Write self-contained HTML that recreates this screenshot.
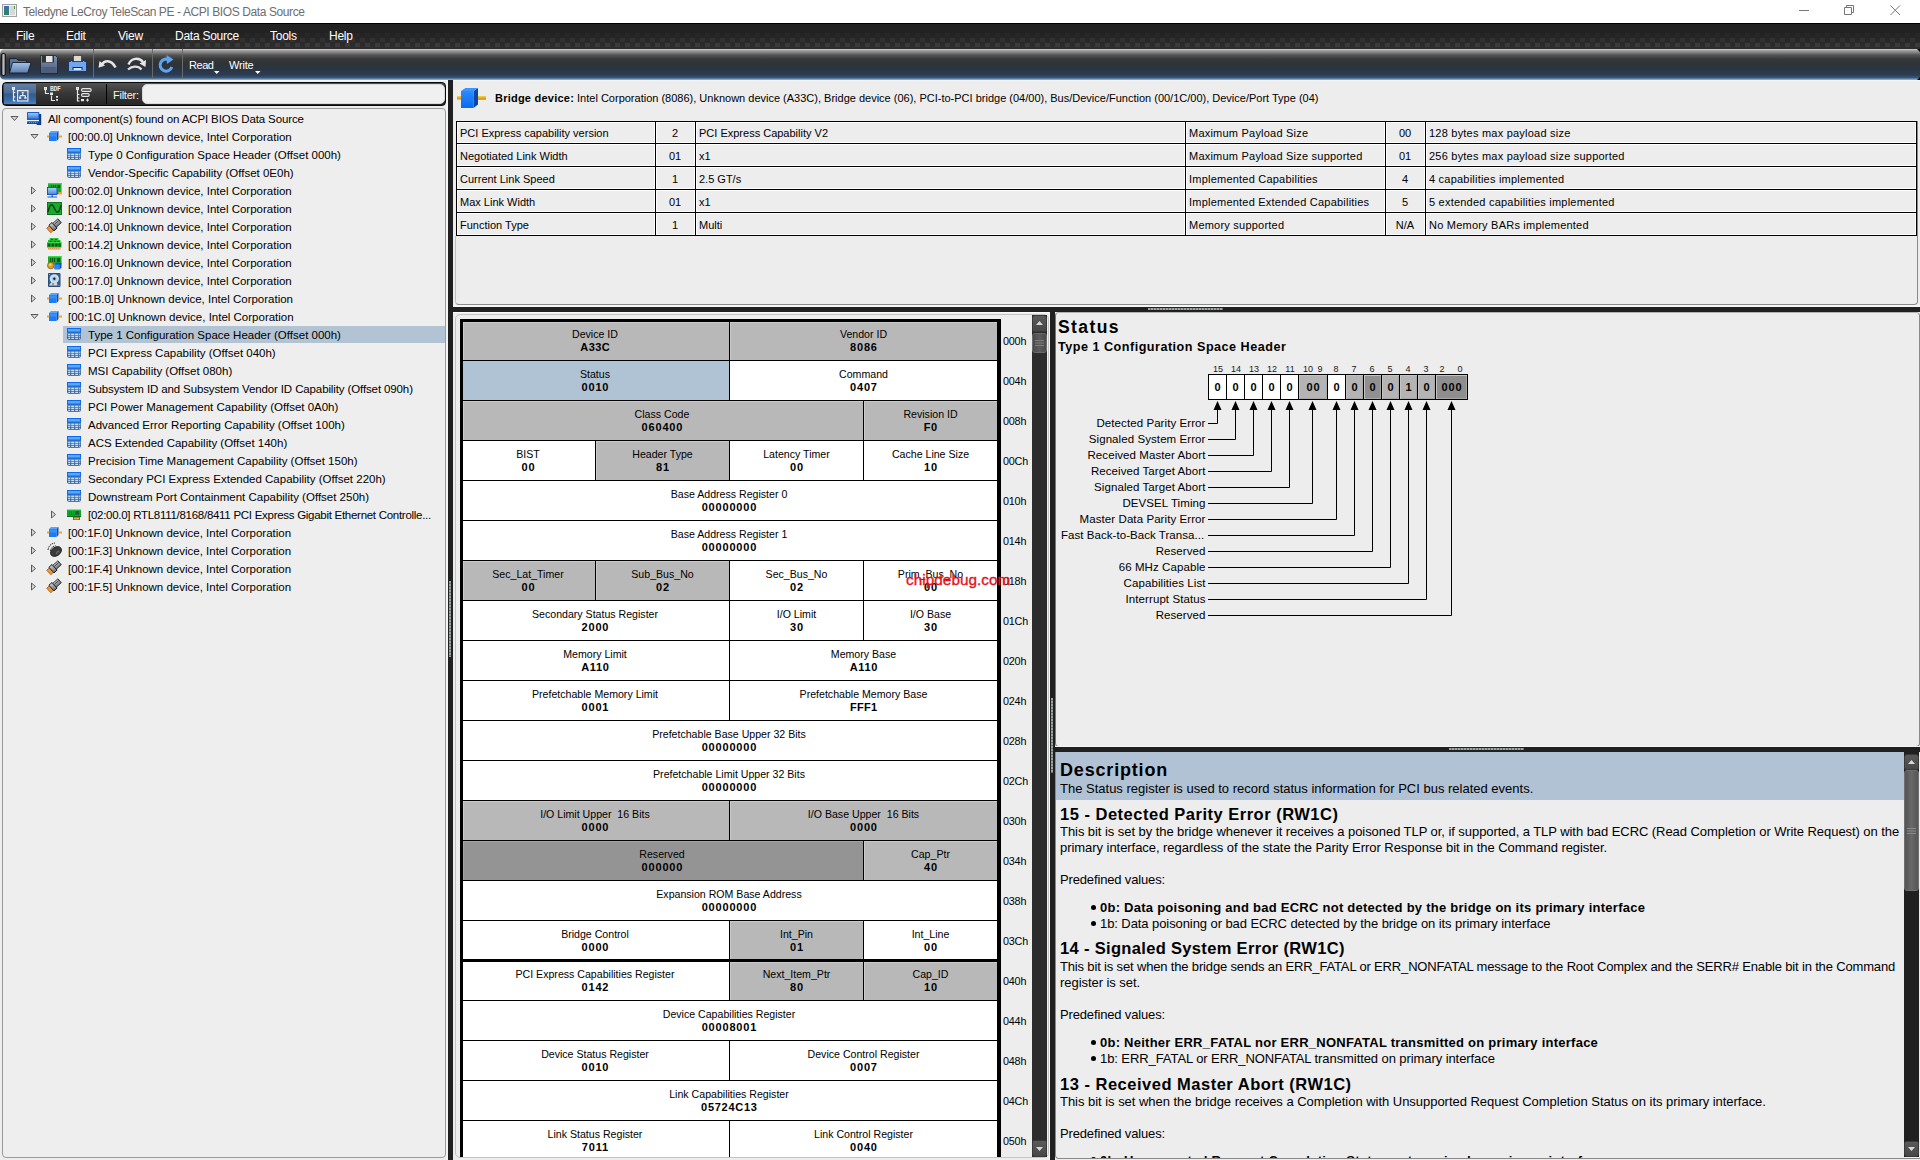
<!DOCTYPE html><html><head><meta charset="utf-8"><title>TeleScan PE</title><style>
html,body{margin:0;padding:0;width:1920px;height:1160px;overflow:hidden;background:#ededed;font-family:"Liberation Sans", sans-serif;}
.t{position:absolute;white-space:pre;font-family:"Liberation Sans", sans-serif;}
.b{position:absolute;box-sizing:border-box;}
svg{position:absolute;overflow:visible;}

</style></head><body>
<div class="b" style="left:0px;top:0px;width:1920px;height:23px;background:#fff;"></div>
<svg style="left:2px;top:4px" width="16" height="14" viewBox="0 0 16 14"><rect x="0.5" y="0.5" width="14" height="12" fill="#f2f2f2" stroke="#a0a0a0"/><rect x="2" y="2" width="5" height="9" fill="#2f7f74"/><rect x="2" y="2" width="5" height="4" fill="#3a6fb0"/><rect x="8" y="2" width="5" height="9" fill="#d8d8d8"/><rect x="12" y="2" width="1" height="3" fill="#3c9a50"/></svg>
<div class="t" style="left:23.00px;top:6.00px;font-size:12px;line-height:12px;font-weight:400;color:#6e6e6e;letter-spacing:-0.4px;">Teledyne LeCroy TeleScan PE - ACPI BIOS Data Source</div>
<div class="b" style="left:1799px;top:10px;width:10px;height:1px;background:#7a7a7a;"></div>
<svg style="left:1840px;top:2px" width="20" height="18" viewBox="0 0 20 18"><path d="M4.5 5.5h7v7h-7z M6.5 5.5v-2h7v7h-2" fill="none" stroke="#777" stroke-width="1"/></svg>
<svg style="left:1888px;top:3px" width="16" height="16" viewBox="0 0 16 16"><path d="M2.5 2.5L12 12M12 2.5L2.5 12" fill="none" stroke="#777" stroke-width="1"/></svg>
<div class="b" style="left:0px;top:23px;width:1920px;height:26px;background:linear-gradient(#000 0,#000 1px,#212121 1px,#222 10px,#2a2a2a 20px,#2e2e2e 26px);"></div>
<div class="b" style="left:0px;top:33px;width:1920px;height:14px;background-image:linear-gradient(90deg,transparent 5px,#272727 5px,#272727 10px,transparent 10px);background-size:10px 4px;background-repeat:repeat-x;background-position:0 0;"></div>
<div class="b" style="left:0px;top:38px;width:1920px;height:4px;background-image:linear-gradient(90deg,#313131 5px,transparent 5px);background-size:10px 4px;background-repeat:repeat-x;"></div>
<div class="b" style="left:0px;top:43px;width:1920px;height:4px;background-image:linear-gradient(90deg,transparent 5px,#3a3a3a 5px,#3a3a3a 10px,transparent 10px);background-size:10px 4px;background-repeat:repeat-x;"></div>
<div class="t" style="left:16.00px;top:30.00px;font-size:12px;line-height:12px;font-weight:400;color:#fff;letter-spacing:-0.25px;">File</div>
<div class="t" style="left:66.00px;top:30.00px;font-size:12px;line-height:12px;font-weight:400;color:#fff;letter-spacing:-0.25px;">Edit</div>
<div class="t" style="left:118.00px;top:30.00px;font-size:12px;line-height:12px;font-weight:400;color:#fff;letter-spacing:-0.25px;">View</div>
<div class="t" style="left:175.00px;top:30.00px;font-size:12px;line-height:12px;font-weight:400;color:#fff;letter-spacing:-0.25px;">Data Source</div>
<div class="t" style="left:270.00px;top:30.00px;font-size:12px;line-height:12px;font-weight:400;color:#fff;letter-spacing:-0.25px;">Tools</div>
<div class="t" style="left:329.00px;top:30.00px;font-size:12px;line-height:12px;font-weight:400;color:#fff;letter-spacing:-0.25px;">Help</div>
<div class="b" style="left:0px;top:49px;width:1920px;height:31px;border-radius:5px 0 0 5px;background:linear-gradient(#dcdcdc 0,#a8a8a8 1px,#8a8a8a 3px,#555 6px,#383838 10px,#2f3238 15px,#2a3646 21px,#2c3d52 26px,#3c5878 29px,#6f9ccc 30px,#8fb4dc 31px);"></div>
<div class="b" style="left:0px;top:80px;width:1920px;height:1px;background:#f4f4f4;"></div>
<svg style="left:1916px;top:49px" width="4" height="32" viewBox="0 0 4 32"><path d="M1 0H4V3z M4 28V31H1z" fill="#000"/></svg>
<div class="b" style="left:1px;top:53px;width:5px;height:23px;border-radius:2px;border:1px solid #1a1a1a;background:linear-gradient(90deg,#666,#b8b8b8 50%,#666);"></div>
<div class="b" style="left:93px;top:49px;width:1px;height:30px;background:#6a6a6a;"></div>
<div class="b" style="left:152px;top:49px;width:1px;height:30px;background:#6a6a6a;"></div>
<div class="b" style="left:182px;top:49px;width:1px;height:30px;background:#6a6a6a;"></div>
<svg style="left:8px;top:57px" width="24" height="18" viewBox="0 0 24 18"><defs><linearGradient id="fg" x1="0" y1="0" x2="0" y2="1"><stop offset="0" stop-color="#a4c2e8"/><stop offset="1" stop-color="#5c7eac"/></linearGradient></defs><path d="M1.5 1.5h7l1.5 1.8h8.5v12.2h-17z" fill="#59749c" stroke="#141c28" stroke-width="0.9"/><path d="M1.5 16 L4.5 5.5 H23 L19.8 16z" fill="url(#fg)" stroke="#141c28" stroke-width="0.9"/></svg>
<svg style="left:40px;top:55px" width="18" height="19" viewBox="0 0 18 19"><defs><linearGradient id="flg" x1="0" y1="0" x2="0" y2="1"><stop offset="0" stop-color="#7d93b8"/><stop offset="1" stop-color="#4a5a78"/></linearGradient></defs><path d="M0.5 0.5h15l2 2v16h-17z" fill="url(#flg)" stroke="#1c2230" stroke-width="0.8"/><rect x="2" y="0.5" width="12" height="7" fill="#333"/><rect x="6" y="1" width="6.5" height="6" fill="#e8e8e8"/><rect x="2.5" y="12" width="13" height="6" fill="#4d5d7a"/></svg>
<svg style="left:68px;top:55px" width="20" height="17" viewBox="0 0 20 17"><rect x="5.5" y="0.5" width="8" height="7" fill="#e0dcd2" stroke="#222" stroke-width="0.6"/><path d="M0.5 6.5h2v-1h2v1h10v-1h2v1h2v10h-18z" fill="#6ea5f5" stroke="#1a2a40" stroke-width="0.8"/><rect x="4.5" y="12" width="10" height="3" fill="#1e2a40"/><rect x="5.5" y="13" width="8" height="2" fill="#e8e0d0"/></svg>
<svg style="left:98px;top:58px" width="20" height="12" viewBox="0 0 20 12"><path d="M3 8 C6 2, 13 1, 17.5 9.5" fill="none" stroke="#e6e6e6" stroke-width="2.6"/><path d="M0.5 9.8 L1.5 3 L7 7.5z" fill="#e6e6e6"/></svg>
<svg style="left:127px;top:56px" width="20" height="15" viewBox="0 0 20 15"><path d="M1.5 8.5 C4 2, 12 1, 16 6" fill="none" stroke="#e6e6e6" stroke-width="2.4"/><path d="M19 4 L18.5 11 L12.5 7.5z" fill="#e6e6e6"/><path d="M1 13.5 C5 10, 11 9.5, 14.5 13.5" fill="none" stroke="#e0e0e0" stroke-width="2.2"/></svg>
<svg style="left:158px;top:54px" width="18" height="20" viewBox="0 0 18 20"><path d="M13.8 13 A6 6 0 1 1 11.5 6.2" fill="none" stroke="#5ea4ee" stroke-width="3"/><path d="M8.5 1 L15.5 5.5 L9 10z" fill="#5ea4ee"/></svg>
<div class="t" style="left:189.00px;top:60.00px;font-size:11px;line-height:11px;font-weight:400;color:#fff;letter-spacing:-0.45px;">Read</div>
<svg style="left:214px;top:71px" width="6" height="4" viewBox="0 0 6 4"><path d="M0 0h5.5l-2.75 3z" fill="#fff"/></svg>
<div class="t" style="left:229.00px;top:60.00px;font-size:11px;line-height:11px;font-weight:400;color:#fff;letter-spacing:-0.2px;">Write</div>
<svg style="left:255px;top:71px" width="6" height="4" viewBox="0 0 6 4"><path d="M0 0h5.5l-2.75 3z" fill="#fff"/></svg>
<div class="b" style="left:2px;top:82px;width:444px;height:24px;border-radius:4px;border:1px solid #0a0a0a;background:linear-gradient(#525252,#383838 45%,#262626);"></div>
<div class="b" style="left:4px;top:84px;width:32px;height:20px;background:linear-gradient(#5f7fa6 0,#4a6b94 45%,#335a8a 50%,#3a6aa6 80%,#4585cc 100%);"></div>
<svg style="left:0;top:82px" width="100" height="24" viewBox="0 82 100 24"><g fill="none" stroke="#e6e6e6" stroke-width="1.2"><rect x="12.6" y="87.6" width="1.8" height="1.8"/><path d="M13.5 89.5V101M13.5 92.5h1.8M13.5 96.8h1.8M13.5 100.8h1.8"/><rect x="17.6" y="90.6" width="10.3" height="10.4"/><path d="M22.7 93.5v2.2M20 95.7h5.5M20 95.7v1.5M25.4 95.7v1.5"/></g><g fill="#e6e6e6"><rect x="21.8" y="92" width="1.9" height="1.6"/><rect x="19" y="97" width="2.2" height="1.8"/><rect x="24.3" y="97" width="2.2" height="1.8"/></g><g fill="none" stroke="#e6e6e6" stroke-width="1.2"><rect x="44.6" y="87.6" width="1.8" height="1.8"/><path d="M45.5 89.5V93.5H49M51.5 95.5V100.5H55"/></g><g fill="#e6e6e6"><rect x="50" y="92.5" width="3" height="2.5"/><rect x="56" y="96" width="2" height="1.7"/><rect x="56" y="99" width="2" height="1.7"/></g><text x="50" y="91.3" font-size="6.3" font-family="Liberation Mono" font-weight="700" fill="#e6e6e6" letter-spacing="-0.3">BDF</text><g fill="none" stroke="#e6e6e6" stroke-width="1.2"><rect x="76.6" y="87.6" width="1.8" height="1.8"/><path d="M77.5 89.5V101H79.5M77.5 94.5h2M77.5 98h2"/><rect x="81.6" y="88.6" width="9.5" height="2.8" rx="1.2"/><rect x="81.6" y="93.6" width="7.5" height="2.8" rx="1.2"/></g><g fill="#e6e6e6"><rect x="81" y="99" width="3" height="2.2"/><path d="M86 100.1h3M87.5 98.6v3" stroke="#e6e6e6" stroke-width="1"/></g></svg>
<div class="b" style="left:106px;top:84px;width:1px;height:20px;background:#000;"></div>
<div class="t" style="left:113.00px;top:90.00px;font-size:11px;line-height:11px;font-weight:400;color:#f4f4f4;letter-spacing:-0.25px;">Filter:</div>
<div class="b" style="left:142px;top:84px;width:303px;height:20px;border-radius:5px;background:#f0f0f0;border:1px solid #d8d8d8;"></div>
<div class="b" style="left:2px;top:108px;width:444px;height:1050px;border-radius:4px;border:1px solid #9a9a9a;background:#eeeeee;"></div>
<div class="b" style="left:63px;top:326px;width:382px;height:17px;background:#b2c3d4;"></div>
<svg style="left:9.5px;top:114.5px" width="9" height="7" viewBox="0 0 9 7"><path d="M1 1.5h7l-3.5 4z" fill="#d8d8d8" stroke="#5a5a5a" stroke-width="1"/></svg>
<svg style="left:27px;top:112px" width="15" height="14" viewBox="0 0 15 14"><defs><linearGradient id="rscr" x1="0" y1="0" x2="0" y2="1"><stop offset="0" stop-color="#9cc8f8"/><stop offset="1" stop-color="#3a7ad8"/></linearGradient></defs><path d="M12 2h2.2v11h-4.5v-1.5h2.3z" fill="#0a3a90"/><rect x="0" y="0" width="12.3" height="8" rx="0.6" fill="#1a5ec8"/><rect x="1" y="1" width="10.3" height="5.6" fill="url(#rscr)"/><path d="M0.3 9.2h12.5l0.5 2.8h-13.3z" fill="#0a4aa8"/><path d="M2 10.6h8.5" stroke="#8ab8f0" stroke-width="0.8" stroke-dasharray="1.2 0.8"/></svg>
<div class="t" style="left:48.00px;top:114.00px;font-size:11.5px;line-height:11.5px;font-weight:400;color:#000;letter-spacing:-0.12px;">All component(s) found on ACPI BIOS Data Source</div>
<svg style="left:29.5px;top:132.5px" width="9" height="7" viewBox="0 0 9 7"><path d="M1 1.5h7l-3.5 4z" fill="#d8d8d8" stroke="#5a5a5a" stroke-width="1"/></svg>
<svg style="left:47px;top:130px" width="15" height="13" viewBox="0 0 15 13"><path d="M2 3 L4 1 H11.5 L9.5 3z" fill="#52a6ff"/><path d="M9.5 3 L11.5 1 V9 L9.5 11z" fill="#0a4cc0"/><rect x="2" y="3" width="7.5" height="8" fill="#1a7cf8"/><rect x="2.5" y="3.5" width="6.5" height="3" fill="#3a8ef8"/><rect x="0" y="5.5" width="2" height="2" fill="#eca818"/><rect x="11.5" y="5.5" width="3.5" height="2" fill="#eca818"/></svg>
<div class="t" style="left:68.00px;top:132.00px;font-size:11.5px;line-height:11.5px;font-weight:400;color:#000;letter-spacing:0px;">[00:00.0] Unknown device, Intel Corporation</div>
<svg style="left:67px;top:148px" width="14" height="12" viewBox="0 0 14 12"><defs><linearGradient id="tblg" x1="0" y1="0" x2="0" y2="1"><stop offset="0" stop-color="#23426a"/><stop offset="0.5" stop-color="#5080b8"/><stop offset="1" stop-color="#2a4a74"/></linearGradient></defs><path d="M0 0h14v9.7a2 2 0 0 1 -2 2h-10a2 2 0 0 1 -2 -2z" fill="url(#tblg)"/><rect x="0" y="0" width="14" height="4.4" rx="0.6" fill="#0a6af8"/><rect x="1" y="1" width="12" height="2.5" fill="#5aaafc"/><g fill="#c4defc"><rect x="1.2" y="5.7" width="2" height="1.3"/><rect x="4.2" y="5.7" width="3" height="1.3"/><rect x="8.2" y="5.7" width="3" height="1.3"/><rect x="12.2" y="5.7" width="1" height="1.3"/><rect x="1.2" y="7.7" width="2" height="1.3"/><rect x="4.2" y="7.7" width="3" height="1.3"/><rect x="8.2" y="7.7" width="3" height="1.3"/><rect x="12.2" y="7.7" width="1" height="1.3"/><rect x="1.2" y="9.7" width="2" height="1.3"/><rect x="4.2" y="9.7" width="3" height="1.3"/><rect x="8.2" y="9.7" width="3" height="1.3"/><rect x="12.2" y="9.7" width="1" height="1.3"/></g></svg>
<div class="t" style="left:88.00px;top:150.00px;font-size:11.5px;line-height:11.5px;font-weight:400;color:#000;letter-spacing:0px;">Type 0 Configuration Space Header (Offset 000h)</div>
<svg style="left:67px;top:166px" width="14" height="12" viewBox="0 0 14 12"><defs><linearGradient id="tblg" x1="0" y1="0" x2="0" y2="1"><stop offset="0" stop-color="#23426a"/><stop offset="0.5" stop-color="#5080b8"/><stop offset="1" stop-color="#2a4a74"/></linearGradient></defs><path d="M0 0h14v9.7a2 2 0 0 1 -2 2h-10a2 2 0 0 1 -2 -2z" fill="url(#tblg)"/><rect x="0" y="0" width="14" height="4.4" rx="0.6" fill="#0a6af8"/><rect x="1" y="1" width="12" height="2.5" fill="#5aaafc"/><g fill="#c4defc"><rect x="1.2" y="5.7" width="2" height="1.3"/><rect x="4.2" y="5.7" width="3" height="1.3"/><rect x="8.2" y="5.7" width="3" height="1.3"/><rect x="12.2" y="5.7" width="1" height="1.3"/><rect x="1.2" y="7.7" width="2" height="1.3"/><rect x="4.2" y="7.7" width="3" height="1.3"/><rect x="8.2" y="7.7" width="3" height="1.3"/><rect x="12.2" y="7.7" width="1" height="1.3"/><rect x="1.2" y="9.7" width="2" height="1.3"/><rect x="4.2" y="9.7" width="3" height="1.3"/><rect x="8.2" y="9.7" width="3" height="1.3"/><rect x="12.2" y="9.7" width="1" height="1.3"/></g></svg>
<div class="t" style="left:88.00px;top:168.00px;font-size:11.5px;line-height:11.5px;font-weight:400;color:#000;letter-spacing:0px;">Vendor-Specific Capability (Offset 0E0h)</div>
<svg style="left:30.0px;top:185.5px" width="7" height="9" viewBox="0 0 7 9"><path d="M1.5 1v7l4-3.5z" fill="#d8d8d8" stroke="#5a5a5a" stroke-width="1"/></svg>
<svg style="left:47px;top:183px" width="15" height="15" viewBox="0 0 15 15"><rect x="1" y="0" width="13.5" height="11" fill="#1aa82a"/><rect x="1" y="0" width="13.5" height="1.3" fill="#3ad84a"/><g fill="#0c5a18"><rect x="4" y="2" width="1" height="3"/><rect x="6" y="2" width="1" height="3"/><rect x="8" y="2" width="1" height="3"/><rect x="10.5" y="2" width="2.5" height="3"/></g><rect x="11.5" y="9" width="3" height="2.5" fill="#f0a040"/><defs><linearGradient id="dscr" x1="0" y1="0" x2="0" y2="1"><stop offset="0" stop-color="#a8d0f8"/><stop offset="1" stop-color="#4a8ae0"/></linearGradient></defs><rect x="0" y="4" width="10.5" height="8" fill="#1a56c0"/><rect x="1" y="5" width="8.5" height="6" fill="url(#dscr)"/><path d="M5.2 12v1.5M0.5 14h9.5" stroke="#1a56c0" stroke-width="1.2"/></svg>
<div class="t" style="left:68.00px;top:186.00px;font-size:11.5px;line-height:11.5px;font-weight:400;color:#000;letter-spacing:0px;">[00:02.0] Unknown device, Intel Corporation</div>
<svg style="left:30.0px;top:203.5px" width="7" height="9" viewBox="0 0 7 9"><path d="M1.5 1v7l4-3.5z" fill="#d8d8d8" stroke="#5a5a5a" stroke-width="1"/></svg>
<svg style="left:47px;top:202px" width="15" height="13" viewBox="0 0 15 13"><rect x="0" y="0" width="15" height="13" fill="#1aa830"/><rect x="0.5" y="0.5" width="14" height="12" fill="none" stroke="#0a7a18"/><path d="M1 10 C3 1, 5 1, 7.5 6.5 S12 12, 14 3" fill="none" stroke="#043a0a" stroke-width="1.3"/></svg>
<div class="t" style="left:68.00px;top:204.00px;font-size:11.5px;line-height:11.5px;font-weight:400;color:#000;letter-spacing:0px;">[00:12.0] Unknown device, Intel Corporation</div>
<svg style="left:30.0px;top:221.5px" width="7" height="9" viewBox="0 0 7 9"><path d="M1.5 1v7l4-3.5z" fill="#d8d8d8" stroke="#5a5a5a" stroke-width="1"/></svg>
<svg style="left:47px;top:218px" width="15" height="15" viewBox="0 0 15 15"><defs><linearGradient id="usbg" x1="0" y1="0" x2="0" y2="1"><stop offset="0" stop-color="#c8ccd0"/><stop offset="1" stop-color="#6a7078"/></linearGradient></defs><g transform="translate(7.2 7.6) rotate(-42)"><rect x="-7.3" y="-3" width="3.6" height="6" fill="#f09838" stroke="#8a4a10" stroke-width="0.7"/><rect x="-3.7" y="-3.8" width="4.2" height="7.6" fill="url(#usbg)" stroke="#181818" stroke-width="0.9"/><rect x="0.5" y="-2.6" width="6.8" height="5.2" fill="url(#usbg)" stroke="#202020" stroke-width="0.8"/><path d="M1 -0.8h6" stroke="#303030" stroke-width="0.8"/></g></svg>
<div class="t" style="left:68.00px;top:222.00px;font-size:11.5px;line-height:11.5px;font-weight:400;color:#000;letter-spacing:0px;">[00:14.0] Unknown device, Intel Corporation</div>
<svg style="left:30.0px;top:239.5px" width="7" height="9" viewBox="0 0 7 9"><path d="M1.5 1v7l4-3.5z" fill="#d8d8d8" stroke="#5a5a5a" stroke-width="1"/></svg>
<svg style="left:47px;top:237px" width="15" height="14" viewBox="0 0 15 14"><rect x="2.5" y="1" width="9" height="2" fill="#2ac83a"/><rect x="1" y="3" width="12.5" height="2" fill="#22b832"/><rect x="0" y="5" width="14.5" height="5.5" fill="#18a828"/><rect x="0" y="5" width="14.5" height="1.2" fill="#3ad84a"/><g fill="#0a4a14"><rect x="1.3" y="6.5" width="2" height="3"/><rect x="4.8" y="6.5" width="2" height="3"/><rect x="8.3" y="6.5" width="2" height="3"/><rect x="11.5" y="6.5" width="2" height="3"/></g><g fill="#0a5a18"><rect x="4" y="2" width="2" height="1"/><rect x="8" y="2" width="2" height="1"/><rect x="3" y="4" width="2" height="1"/><rect x="7" y="4" width="2" height="1"/><rect x="10.5" y="4" width="2" height="1"/></g><rect x="1" y="10.5" width="12.5" height="2" fill="#f08a48"/><path d="M2 11.5h11" stroke="#ffd080" stroke-width="0.6" stroke-dasharray="1 1"/></svg>
<div class="t" style="left:68.00px;top:240.00px;font-size:11.5px;line-height:11.5px;font-weight:400;color:#000;letter-spacing:0px;">[00:14.2] Unknown device, Intel Corporation</div>
<svg style="left:30.0px;top:257.5px" width="7" height="9" viewBox="0 0 7 9"><path d="M1.5 1v7l4-3.5z" fill="#d8d8d8" stroke="#5a5a5a" stroke-width="1"/></svg>
<svg style="left:47px;top:255px" width="15" height="15" viewBox="0 0 15 15"><rect x="1" y="1" width="13.5" height="8.5" fill="#1aa82a"/><rect x="1" y="1" width="13.5" height="1.3" fill="#3ad84a"/><g fill="#0c5a18"><rect x="3" y="3" width="1" height="4"/><rect x="5" y="3" width="1" height="4"/><rect x="7" y="3" width="1" height="4"/><rect x="10" y="3" width="3" height="4"/></g><path d="M7.5 9.5 L9.5 7.8 H14.5 V12.5 L12.8 14.2 H7.5z" fill="#0a50c8"/><rect x="7.5" y="9.5" width="5.3" height="4.7" fill="#2a88f8"/><circle cx="3.8" cy="10.5" r="3.3" fill="#e0a028" stroke="#8a5a10" stroke-width="0.8"/><circle cx="3.2" cy="9.6" r="1.2" fill="#f8d870"/></svg>
<div class="t" style="left:68.00px;top:258.00px;font-size:11.5px;line-height:11.5px;font-weight:400;color:#000;letter-spacing:0px;">[00:16.0] Unknown device, Intel Corporation</div>
<svg style="left:30.0px;top:275.5px" width="7" height="9" viewBox="0 0 7 9"><path d="M1.5 1v7l4-3.5z" fill="#d8d8d8" stroke="#5a5a5a" stroke-width="1"/></svg>
<svg style="left:47px;top:273px" width="15" height="15" viewBox="0 0 15 15"><rect x="1" y="0" width="12.5" height="14" rx="1" fill="#2a4a78"/><rect x="1.8" y="0.8" width="10.9" height="12.4" fill="#3a5e90"/><circle cx="7.3" cy="5.8" r="4.6" fill="#c8e4f4"/><circle cx="7.3" cy="5.8" r="2.5" fill="#a0c8e8"/><path d="M7.3 4.3 L8.8 5.8 L7.3 7.3 L5.8 5.8z" fill="#202020"/><path d="M2 12.5 L4 9.5 L8 8.5 L10 10 L10.5 12.5z" fill="#d8d8d8"/><circle cx="6" cy="11" r="0.8" fill="#404040"/><circle cx="2.5" cy="1.5" r="0.5" fill="#a0c0e0"/><circle cx="12" cy="12.5" r="0.5" fill="#a0c0e0"/></svg>
<div class="t" style="left:68.00px;top:276.00px;font-size:11.5px;line-height:11.5px;font-weight:400;color:#000;letter-spacing:0px;">[00:17.0] Unknown device, Intel Corporation</div>
<svg style="left:30.0px;top:293.5px" width="7" height="9" viewBox="0 0 7 9"><path d="M1.5 1v7l4-3.5z" fill="#d8d8d8" stroke="#5a5a5a" stroke-width="1"/></svg>
<svg style="left:47px;top:292px" width="15" height="13" viewBox="0 0 15 13"><path d="M2 3 L4 1 H11.5 L9.5 3z" fill="#52a6ff"/><path d="M9.5 3 L11.5 1 V9 L9.5 11z" fill="#0a4cc0"/><rect x="2" y="3" width="7.5" height="8" fill="#1a7cf8"/><rect x="2.5" y="3.5" width="6.5" height="3" fill="#3a8ef8"/><rect x="0" y="5.5" width="2" height="2" fill="#eca818"/><rect x="11.5" y="5.5" width="3.5" height="2" fill="#eca818"/></svg>
<div class="t" style="left:68.00px;top:294.00px;font-size:11.5px;line-height:11.5px;font-weight:400;color:#000;letter-spacing:0px;">[00:1B.0] Unknown device, Intel Corporation</div>
<svg style="left:29.5px;top:312.5px" width="9" height="7" viewBox="0 0 9 7"><path d="M1 1.5h7l-3.5 4z" fill="#d8d8d8" stroke="#5a5a5a" stroke-width="1"/></svg>
<svg style="left:47px;top:310px" width="15" height="13" viewBox="0 0 15 13"><path d="M2 3 L4 1 H11.5 L9.5 3z" fill="#52a6ff"/><path d="M9.5 3 L11.5 1 V9 L9.5 11z" fill="#0a4cc0"/><rect x="2" y="3" width="7.5" height="8" fill="#1a7cf8"/><rect x="2.5" y="3.5" width="6.5" height="3" fill="#3a8ef8"/><rect x="0" y="5.5" width="2" height="2" fill="#eca818"/><rect x="11.5" y="5.5" width="3.5" height="2" fill="#eca818"/></svg>
<div class="t" style="left:68.00px;top:312.00px;font-size:11.5px;line-height:11.5px;font-weight:400;color:#000;letter-spacing:0px;">[00:1C.0] Unknown device, Intel Corporation</div>
<svg style="left:67px;top:328px" width="14" height="12" viewBox="0 0 14 12"><defs><linearGradient id="tblg" x1="0" y1="0" x2="0" y2="1"><stop offset="0" stop-color="#23426a"/><stop offset="0.5" stop-color="#5080b8"/><stop offset="1" stop-color="#2a4a74"/></linearGradient></defs><path d="M0 0h14v9.7a2 2 0 0 1 -2 2h-10a2 2 0 0 1 -2 -2z" fill="url(#tblg)"/><rect x="0" y="0" width="14" height="4.4" rx="0.6" fill="#0a6af8"/><rect x="1" y="1" width="12" height="2.5" fill="#5aaafc"/><g fill="#c4defc"><rect x="1.2" y="5.7" width="2" height="1.3"/><rect x="4.2" y="5.7" width="3" height="1.3"/><rect x="8.2" y="5.7" width="3" height="1.3"/><rect x="12.2" y="5.7" width="1" height="1.3"/><rect x="1.2" y="7.7" width="2" height="1.3"/><rect x="4.2" y="7.7" width="3" height="1.3"/><rect x="8.2" y="7.7" width="3" height="1.3"/><rect x="12.2" y="7.7" width="1" height="1.3"/><rect x="1.2" y="9.7" width="2" height="1.3"/><rect x="4.2" y="9.7" width="3" height="1.3"/><rect x="8.2" y="9.7" width="3" height="1.3"/><rect x="12.2" y="9.7" width="1" height="1.3"/></g></svg>
<div class="t" style="left:88.00px;top:330.00px;font-size:11.5px;line-height:11.5px;font-weight:400;color:#000;letter-spacing:0px;">Type 1 Configuration Space Header (Offset 000h)</div>
<svg style="left:67px;top:346px" width="14" height="12" viewBox="0 0 14 12"><defs><linearGradient id="tblg" x1="0" y1="0" x2="0" y2="1"><stop offset="0" stop-color="#23426a"/><stop offset="0.5" stop-color="#5080b8"/><stop offset="1" stop-color="#2a4a74"/></linearGradient></defs><path d="M0 0h14v9.7a2 2 0 0 1 -2 2h-10a2 2 0 0 1 -2 -2z" fill="url(#tblg)"/><rect x="0" y="0" width="14" height="4.4" rx="0.6" fill="#0a6af8"/><rect x="1" y="1" width="12" height="2.5" fill="#5aaafc"/><g fill="#c4defc"><rect x="1.2" y="5.7" width="2" height="1.3"/><rect x="4.2" y="5.7" width="3" height="1.3"/><rect x="8.2" y="5.7" width="3" height="1.3"/><rect x="12.2" y="5.7" width="1" height="1.3"/><rect x="1.2" y="7.7" width="2" height="1.3"/><rect x="4.2" y="7.7" width="3" height="1.3"/><rect x="8.2" y="7.7" width="3" height="1.3"/><rect x="12.2" y="7.7" width="1" height="1.3"/><rect x="1.2" y="9.7" width="2" height="1.3"/><rect x="4.2" y="9.7" width="3" height="1.3"/><rect x="8.2" y="9.7" width="3" height="1.3"/><rect x="12.2" y="9.7" width="1" height="1.3"/></g></svg>
<div class="t" style="left:88.00px;top:348.00px;font-size:11.5px;line-height:11.5px;font-weight:400;color:#000;letter-spacing:0px;">PCI Express Capability (Offset 040h)</div>
<svg style="left:67px;top:364px" width="14" height="12" viewBox="0 0 14 12"><defs><linearGradient id="tblg" x1="0" y1="0" x2="0" y2="1"><stop offset="0" stop-color="#23426a"/><stop offset="0.5" stop-color="#5080b8"/><stop offset="1" stop-color="#2a4a74"/></linearGradient></defs><path d="M0 0h14v9.7a2 2 0 0 1 -2 2h-10a2 2 0 0 1 -2 -2z" fill="url(#tblg)"/><rect x="0" y="0" width="14" height="4.4" rx="0.6" fill="#0a6af8"/><rect x="1" y="1" width="12" height="2.5" fill="#5aaafc"/><g fill="#c4defc"><rect x="1.2" y="5.7" width="2" height="1.3"/><rect x="4.2" y="5.7" width="3" height="1.3"/><rect x="8.2" y="5.7" width="3" height="1.3"/><rect x="12.2" y="5.7" width="1" height="1.3"/><rect x="1.2" y="7.7" width="2" height="1.3"/><rect x="4.2" y="7.7" width="3" height="1.3"/><rect x="8.2" y="7.7" width="3" height="1.3"/><rect x="12.2" y="7.7" width="1" height="1.3"/><rect x="1.2" y="9.7" width="2" height="1.3"/><rect x="4.2" y="9.7" width="3" height="1.3"/><rect x="8.2" y="9.7" width="3" height="1.3"/><rect x="12.2" y="9.7" width="1" height="1.3"/></g></svg>
<div class="t" style="left:88.00px;top:366.00px;font-size:11.5px;line-height:11.5px;font-weight:400;color:#000;letter-spacing:0px;">MSI Capability (Offset 080h)</div>
<svg style="left:67px;top:382px" width="14" height="12" viewBox="0 0 14 12"><defs><linearGradient id="tblg" x1="0" y1="0" x2="0" y2="1"><stop offset="0" stop-color="#23426a"/><stop offset="0.5" stop-color="#5080b8"/><stop offset="1" stop-color="#2a4a74"/></linearGradient></defs><path d="M0 0h14v9.7a2 2 0 0 1 -2 2h-10a2 2 0 0 1 -2 -2z" fill="url(#tblg)"/><rect x="0" y="0" width="14" height="4.4" rx="0.6" fill="#0a6af8"/><rect x="1" y="1" width="12" height="2.5" fill="#5aaafc"/><g fill="#c4defc"><rect x="1.2" y="5.7" width="2" height="1.3"/><rect x="4.2" y="5.7" width="3" height="1.3"/><rect x="8.2" y="5.7" width="3" height="1.3"/><rect x="12.2" y="5.7" width="1" height="1.3"/><rect x="1.2" y="7.7" width="2" height="1.3"/><rect x="4.2" y="7.7" width="3" height="1.3"/><rect x="8.2" y="7.7" width="3" height="1.3"/><rect x="12.2" y="7.7" width="1" height="1.3"/><rect x="1.2" y="9.7" width="2" height="1.3"/><rect x="4.2" y="9.7" width="3" height="1.3"/><rect x="8.2" y="9.7" width="3" height="1.3"/><rect x="12.2" y="9.7" width="1" height="1.3"/></g></svg>
<div class="t" style="left:88.00px;top:384.00px;font-size:11.5px;line-height:11.5px;font-weight:400;color:#000;letter-spacing:-0.12px;">Subsystem ID and Subsystem Vendor ID Capability (Offset 090h)</div>
<svg style="left:67px;top:400px" width="14" height="12" viewBox="0 0 14 12"><defs><linearGradient id="tblg" x1="0" y1="0" x2="0" y2="1"><stop offset="0" stop-color="#23426a"/><stop offset="0.5" stop-color="#5080b8"/><stop offset="1" stop-color="#2a4a74"/></linearGradient></defs><path d="M0 0h14v9.7a2 2 0 0 1 -2 2h-10a2 2 0 0 1 -2 -2z" fill="url(#tblg)"/><rect x="0" y="0" width="14" height="4.4" rx="0.6" fill="#0a6af8"/><rect x="1" y="1" width="12" height="2.5" fill="#5aaafc"/><g fill="#c4defc"><rect x="1.2" y="5.7" width="2" height="1.3"/><rect x="4.2" y="5.7" width="3" height="1.3"/><rect x="8.2" y="5.7" width="3" height="1.3"/><rect x="12.2" y="5.7" width="1" height="1.3"/><rect x="1.2" y="7.7" width="2" height="1.3"/><rect x="4.2" y="7.7" width="3" height="1.3"/><rect x="8.2" y="7.7" width="3" height="1.3"/><rect x="12.2" y="7.7" width="1" height="1.3"/><rect x="1.2" y="9.7" width="2" height="1.3"/><rect x="4.2" y="9.7" width="3" height="1.3"/><rect x="8.2" y="9.7" width="3" height="1.3"/><rect x="12.2" y="9.7" width="1" height="1.3"/></g></svg>
<div class="t" style="left:88.00px;top:402.00px;font-size:11.5px;line-height:11.5px;font-weight:400;color:#000;letter-spacing:0px;">PCI Power Management Capability (Offset 0A0h)</div>
<svg style="left:67px;top:418px" width="14" height="12" viewBox="0 0 14 12"><defs><linearGradient id="tblg" x1="0" y1="0" x2="0" y2="1"><stop offset="0" stop-color="#23426a"/><stop offset="0.5" stop-color="#5080b8"/><stop offset="1" stop-color="#2a4a74"/></linearGradient></defs><path d="M0 0h14v9.7a2 2 0 0 1 -2 2h-10a2 2 0 0 1 -2 -2z" fill="url(#tblg)"/><rect x="0" y="0" width="14" height="4.4" rx="0.6" fill="#0a6af8"/><rect x="1" y="1" width="12" height="2.5" fill="#5aaafc"/><g fill="#c4defc"><rect x="1.2" y="5.7" width="2" height="1.3"/><rect x="4.2" y="5.7" width="3" height="1.3"/><rect x="8.2" y="5.7" width="3" height="1.3"/><rect x="12.2" y="5.7" width="1" height="1.3"/><rect x="1.2" y="7.7" width="2" height="1.3"/><rect x="4.2" y="7.7" width="3" height="1.3"/><rect x="8.2" y="7.7" width="3" height="1.3"/><rect x="12.2" y="7.7" width="1" height="1.3"/><rect x="1.2" y="9.7" width="2" height="1.3"/><rect x="4.2" y="9.7" width="3" height="1.3"/><rect x="8.2" y="9.7" width="3" height="1.3"/><rect x="12.2" y="9.7" width="1" height="1.3"/></g></svg>
<div class="t" style="left:88.00px;top:420.00px;font-size:11.5px;line-height:11.5px;font-weight:400;color:#000;letter-spacing:0px;">Advanced Error Reporting Capability (Offset 100h)</div>
<svg style="left:67px;top:436px" width="14" height="12" viewBox="0 0 14 12"><defs><linearGradient id="tblg" x1="0" y1="0" x2="0" y2="1"><stop offset="0" stop-color="#23426a"/><stop offset="0.5" stop-color="#5080b8"/><stop offset="1" stop-color="#2a4a74"/></linearGradient></defs><path d="M0 0h14v9.7a2 2 0 0 1 -2 2h-10a2 2 0 0 1 -2 -2z" fill="url(#tblg)"/><rect x="0" y="0" width="14" height="4.4" rx="0.6" fill="#0a6af8"/><rect x="1" y="1" width="12" height="2.5" fill="#5aaafc"/><g fill="#c4defc"><rect x="1.2" y="5.7" width="2" height="1.3"/><rect x="4.2" y="5.7" width="3" height="1.3"/><rect x="8.2" y="5.7" width="3" height="1.3"/><rect x="12.2" y="5.7" width="1" height="1.3"/><rect x="1.2" y="7.7" width="2" height="1.3"/><rect x="4.2" y="7.7" width="3" height="1.3"/><rect x="8.2" y="7.7" width="3" height="1.3"/><rect x="12.2" y="7.7" width="1" height="1.3"/><rect x="1.2" y="9.7" width="2" height="1.3"/><rect x="4.2" y="9.7" width="3" height="1.3"/><rect x="8.2" y="9.7" width="3" height="1.3"/><rect x="12.2" y="9.7" width="1" height="1.3"/></g></svg>
<div class="t" style="left:88.00px;top:438.00px;font-size:11.5px;line-height:11.5px;font-weight:400;color:#000;letter-spacing:0px;">ACS Extended Capability (Offset 140h)</div>
<svg style="left:67px;top:454px" width="14" height="12" viewBox="0 0 14 12"><defs><linearGradient id="tblg" x1="0" y1="0" x2="0" y2="1"><stop offset="0" stop-color="#23426a"/><stop offset="0.5" stop-color="#5080b8"/><stop offset="1" stop-color="#2a4a74"/></linearGradient></defs><path d="M0 0h14v9.7a2 2 0 0 1 -2 2h-10a2 2 0 0 1 -2 -2z" fill="url(#tblg)"/><rect x="0" y="0" width="14" height="4.4" rx="0.6" fill="#0a6af8"/><rect x="1" y="1" width="12" height="2.5" fill="#5aaafc"/><g fill="#c4defc"><rect x="1.2" y="5.7" width="2" height="1.3"/><rect x="4.2" y="5.7" width="3" height="1.3"/><rect x="8.2" y="5.7" width="3" height="1.3"/><rect x="12.2" y="5.7" width="1" height="1.3"/><rect x="1.2" y="7.7" width="2" height="1.3"/><rect x="4.2" y="7.7" width="3" height="1.3"/><rect x="8.2" y="7.7" width="3" height="1.3"/><rect x="12.2" y="7.7" width="1" height="1.3"/><rect x="1.2" y="9.7" width="2" height="1.3"/><rect x="4.2" y="9.7" width="3" height="1.3"/><rect x="8.2" y="9.7" width="3" height="1.3"/><rect x="12.2" y="9.7" width="1" height="1.3"/></g></svg>
<div class="t" style="left:88.00px;top:456.00px;font-size:11.5px;line-height:11.5px;font-weight:400;color:#000;letter-spacing:0px;">Precision Time Management Capability (Offset 150h)</div>
<svg style="left:67px;top:472px" width="14" height="12" viewBox="0 0 14 12"><defs><linearGradient id="tblg" x1="0" y1="0" x2="0" y2="1"><stop offset="0" stop-color="#23426a"/><stop offset="0.5" stop-color="#5080b8"/><stop offset="1" stop-color="#2a4a74"/></linearGradient></defs><path d="M0 0h14v9.7a2 2 0 0 1 -2 2h-10a2 2 0 0 1 -2 -2z" fill="url(#tblg)"/><rect x="0" y="0" width="14" height="4.4" rx="0.6" fill="#0a6af8"/><rect x="1" y="1" width="12" height="2.5" fill="#5aaafc"/><g fill="#c4defc"><rect x="1.2" y="5.7" width="2" height="1.3"/><rect x="4.2" y="5.7" width="3" height="1.3"/><rect x="8.2" y="5.7" width="3" height="1.3"/><rect x="12.2" y="5.7" width="1" height="1.3"/><rect x="1.2" y="7.7" width="2" height="1.3"/><rect x="4.2" y="7.7" width="3" height="1.3"/><rect x="8.2" y="7.7" width="3" height="1.3"/><rect x="12.2" y="7.7" width="1" height="1.3"/><rect x="1.2" y="9.7" width="2" height="1.3"/><rect x="4.2" y="9.7" width="3" height="1.3"/><rect x="8.2" y="9.7" width="3" height="1.3"/><rect x="12.2" y="9.7" width="1" height="1.3"/></g></svg>
<div class="t" style="left:88.00px;top:474.00px;font-size:11.5px;line-height:11.5px;font-weight:400;color:#000;letter-spacing:0px;">Secondary PCI Express Extended Capability (Offset 220h)</div>
<svg style="left:67px;top:490px" width="14" height="12" viewBox="0 0 14 12"><defs><linearGradient id="tblg" x1="0" y1="0" x2="0" y2="1"><stop offset="0" stop-color="#23426a"/><stop offset="0.5" stop-color="#5080b8"/><stop offset="1" stop-color="#2a4a74"/></linearGradient></defs><path d="M0 0h14v9.7a2 2 0 0 1 -2 2h-10a2 2 0 0 1 -2 -2z" fill="url(#tblg)"/><rect x="0" y="0" width="14" height="4.4" rx="0.6" fill="#0a6af8"/><rect x="1" y="1" width="12" height="2.5" fill="#5aaafc"/><g fill="#c4defc"><rect x="1.2" y="5.7" width="2" height="1.3"/><rect x="4.2" y="5.7" width="3" height="1.3"/><rect x="8.2" y="5.7" width="3" height="1.3"/><rect x="12.2" y="5.7" width="1" height="1.3"/><rect x="1.2" y="7.7" width="2" height="1.3"/><rect x="4.2" y="7.7" width="3" height="1.3"/><rect x="8.2" y="7.7" width="3" height="1.3"/><rect x="12.2" y="7.7" width="1" height="1.3"/><rect x="1.2" y="9.7" width="2" height="1.3"/><rect x="4.2" y="9.7" width="3" height="1.3"/><rect x="8.2" y="9.7" width="3" height="1.3"/><rect x="12.2" y="9.7" width="1" height="1.3"/></g></svg>
<div class="t" style="left:88.00px;top:492.00px;font-size:11.5px;line-height:11.5px;font-weight:400;color:#000;letter-spacing:0px;">Downstream Port Containment Capability (Offset 250h)</div>
<svg style="left:50.0px;top:509.5px" width="7" height="9" viewBox="0 0 7 9"><path d="M1.5 1v7l4-3.5z" fill="#d8d8d8" stroke="#5a5a5a" stroke-width="1"/></svg>
<svg style="left:67px;top:508px" width="15" height="13" viewBox="0 0 15 13"><rect x="0" y="1" width="14" height="8" fill="#0ea828"/><rect x="0" y="1" width="14" height="1.2" fill="#6af08a"/><rect x="0" y="8" width="14" height="1" fill="#067018"/><rect x="2" y="3" width="10" height="4" fill="#128030"/><g fill="#0ac030"><rect x="3" y="3" width="0.8" height="3.5"/><rect x="5" y="3" width="0.8" height="3.5"/><rect x="7" y="3" width="0.8" height="3.5"/></g><rect x="8.5" y="3" width="3.5" height="3.5" fill="#2a5a38"/><rect x="6" y="9" width="7" height="3" fill="#5a5a10"/><rect x="6.7" y="9.5" width="5.6" height="2" fill="#f0a848"/></svg>
<div class="t" style="left:88.00px;top:510.00px;font-size:11.5px;line-height:11.5px;font-weight:400;color:#000;letter-spacing:-0.28px;">[02:00.0] RTL8111/8168/8411 PCI Express Gigabit Ethernet Controlle...</div>
<svg style="left:30.0px;top:527.5px" width="7" height="9" viewBox="0 0 7 9"><path d="M1.5 1v7l4-3.5z" fill="#d8d8d8" stroke="#5a5a5a" stroke-width="1"/></svg>
<svg style="left:47px;top:526px" width="15" height="13" viewBox="0 0 15 13"><path d="M2 3 L4 1 H11.5 L9.5 3z" fill="#52a6ff"/><path d="M9.5 3 L11.5 1 V9 L9.5 11z" fill="#0a4cc0"/><rect x="2" y="3" width="7.5" height="8" fill="#1a7cf8"/><rect x="2.5" y="3.5" width="6.5" height="3" fill="#3a8ef8"/><rect x="0" y="5.5" width="2" height="2" fill="#eca818"/><rect x="11.5" y="5.5" width="3.5" height="2" fill="#eca818"/></svg>
<div class="t" style="left:68.00px;top:528.00px;font-size:11.5px;line-height:11.5px;font-weight:400;color:#000;letter-spacing:0px;">[00:1F.0] Unknown device, Intel Corporation</div>
<svg style="left:30.0px;top:545.5px" width="7" height="9" viewBox="0 0 7 9"><path d="M1.5 1v7l4-3.5z" fill="#d8d8d8" stroke="#5a5a5a" stroke-width="1"/></svg>
<svg style="left:47px;top:542px" width="15" height="15" viewBox="0 0 15 15"><g transform="translate(9 9.5) rotate(-35)"><ellipse cx="0" cy="0" rx="6" ry="4.3" fill="#3c3c3c" stroke="#1a1a1a" stroke-width="0.8"/><path d="M-1 2.5 C1 0, 3 0.5, 2 2.5" stroke="#8a8a8a" fill="none" stroke-width="0.7"/></g><path d="M1 8 C1.5 4, 4 1.5, 8 1" stroke="#2a2a2a" fill="none" stroke-width="1" stroke-dasharray="1.6 0.8"/><path d="M3.3 9 C3.8 6.3, 5.5 4.3, 8.5 3.6" stroke="#2a2a2a" fill="none" stroke-width="1" stroke-dasharray="1.6 0.8"/></svg>
<div class="t" style="left:68.00px;top:546.00px;font-size:11.5px;line-height:11.5px;font-weight:400;color:#000;letter-spacing:0px;">[00:1F.3] Unknown device, Intel Corporation</div>
<svg style="left:30.0px;top:563.5px" width="7" height="9" viewBox="0 0 7 9"><path d="M1.5 1v7l4-3.5z" fill="#d8d8d8" stroke="#5a5a5a" stroke-width="1"/></svg>
<svg style="left:47px;top:560px" width="15" height="15" viewBox="0 0 15 15"><defs><linearGradient id="usbg" x1="0" y1="0" x2="0" y2="1"><stop offset="0" stop-color="#c8ccd0"/><stop offset="1" stop-color="#6a7078"/></linearGradient></defs><g transform="translate(7.2 7.6) rotate(-42)"><rect x="-7.3" y="-3" width="3.6" height="6" fill="#f09838" stroke="#8a4a10" stroke-width="0.7"/><rect x="-3.7" y="-3.8" width="4.2" height="7.6" fill="url(#usbg)" stroke="#181818" stroke-width="0.9"/><rect x="0.5" y="-2.6" width="6.8" height="5.2" fill="url(#usbg)" stroke="#202020" stroke-width="0.8"/><path d="M1 -0.8h6" stroke="#303030" stroke-width="0.8"/></g></svg>
<div class="t" style="left:68.00px;top:564.00px;font-size:11.5px;line-height:11.5px;font-weight:400;color:#000;letter-spacing:0px;">[00:1F.4] Unknown device, Intel Corporation</div>
<svg style="left:30.0px;top:581.5px" width="7" height="9" viewBox="0 0 7 9"><path d="M1.5 1v7l4-3.5z" fill="#d8d8d8" stroke="#5a5a5a" stroke-width="1"/></svg>
<svg style="left:47px;top:578px" width="15" height="15" viewBox="0 0 15 15"><defs><linearGradient id="usbg" x1="0" y1="0" x2="0" y2="1"><stop offset="0" stop-color="#c8ccd0"/><stop offset="1" stop-color="#6a7078"/></linearGradient></defs><g transform="translate(7.2 7.6) rotate(-42)"><rect x="-7.3" y="-3" width="3.6" height="6" fill="#f09838" stroke="#8a4a10" stroke-width="0.7"/><rect x="-3.7" y="-3.8" width="4.2" height="7.6" fill="url(#usbg)" stroke="#181818" stroke-width="0.9"/><rect x="0.5" y="-2.6" width="6.8" height="5.2" fill="url(#usbg)" stroke="#202020" stroke-width="0.8"/><path d="M1 -0.8h6" stroke="#303030" stroke-width="0.8"/></g></svg>
<div class="t" style="left:68.00px;top:582.00px;font-size:11.5px;line-height:11.5px;font-weight:400;color:#000;letter-spacing:0px;">[00:1F.5] Unknown device, Intel Corporation</div>
<div class="b" style="left:446px;top:80px;width:2px;height:1080px;background:#f4f4f4;"></div>
<div class="b" style="left:448px;top:80px;width:5px;height:1080px;background:#202020;"></div>
<div class="b" style="left:453px;top:305px;width:1467px;height:2px;background:#f6f6f6;"></div>
<div class="b" style="left:453px;top:307px;width:1467px;height:5px;background:#202020;"></div>
<div class="b" style="left:455px;top:236px;width:1463px;height:69px;border:1px solid #8a8a8a;border-left-color:#c0c0c0;border-top:none;border-radius:0 0 4px 4px;"></div>
<div class="b" style="left:1917px;top:121px;width:1px;height:116px;background:#8a8a8a;"></div>
<svg style="left:457px;top:87px" width="30" height="22" viewBox="0 0 30 22"><defs><linearGradient id="cubeF" x1="0" y1="0" x2="0" y2="1"><stop offset="0" stop-color="#2a8aff"/><stop offset="1" stop-color="#0a6af0"/></linearGradient><linearGradient id="rod" x1="0" y1="0" x2="0" y2="1"><stop offset="0" stop-color="#f8d048"/><stop offset="1" stop-color="#d08a08"/></linearGradient></defs><rect x="0" y="9" width="29" height="3.5" fill="url(#rod)"/><path d="M16.5 4 L21 1 V17.5 L16.5 21z" fill="#0846a8"/><path d="M4 4 L8.5 1 H21 L16.5 4z" fill="#3c94ff"/><rect x="4" y="4" width="12.5" height="17" fill="url(#cubeF)"/><rect x="21" y="9" width="8" height="3.5" fill="url(#rod)"/></svg>
<div class="t" style="left:495.00px;top:93.00px;font-size:11px;line-height:11px;font-weight:700;color:#000;letter-spacing:0.23px;">Bridge device:</div>
<div class="t" style="left:574.00px;top:93.00px;font-size:11px;line-height:11px;font-weight:400;color:#000;letter-spacing:0px;"> Intel Corporation (8086), Unknown device (A33C), Bridge device (06), PCI-to-PCI bridge (04/00), Bus/Device/Function (00/1C/00), Device/Port Type (04)</div>
<div class="b" style="left:457px;top:122px;width:198px;height:21px;border:1px solid #fff;"></div>
<div class="b" style="left:656px;top:122px;width:39px;height:21px;border:1px solid #fff;"></div>
<div class="b" style="left:696px;top:122px;width:489px;height:21px;border:1px solid #fff;"></div>
<div class="b" style="left:1186px;top:122px;width:199px;height:21px;border:1px solid #fff;"></div>
<div class="b" style="left:1386px;top:122px;width:39px;height:21px;border:1px solid #fff;"></div>
<div class="b" style="left:1426px;top:122px;width:490px;height:21px;border:1px solid #fff;"></div>
<div class="b" style="left:457px;top:144px;width:198px;height:22px;border:1px solid #fff;"></div>
<div class="b" style="left:656px;top:144px;width:39px;height:22px;border:1px solid #fff;"></div>
<div class="b" style="left:696px;top:144px;width:489px;height:22px;border:1px solid #fff;"></div>
<div class="b" style="left:1186px;top:144px;width:199px;height:22px;border:1px solid #fff;"></div>
<div class="b" style="left:1386px;top:144px;width:39px;height:22px;border:1px solid #fff;"></div>
<div class="b" style="left:1426px;top:144px;width:490px;height:22px;border:1px solid #fff;"></div>
<div class="b" style="left:457px;top:167px;width:198px;height:22px;border:1px solid #fff;"></div>
<div class="b" style="left:656px;top:167px;width:39px;height:22px;border:1px solid #fff;"></div>
<div class="b" style="left:696px;top:167px;width:489px;height:22px;border:1px solid #fff;"></div>
<div class="b" style="left:1186px;top:167px;width:199px;height:22px;border:1px solid #fff;"></div>
<div class="b" style="left:1386px;top:167px;width:39px;height:22px;border:1px solid #fff;"></div>
<div class="b" style="left:1426px;top:167px;width:490px;height:22px;border:1px solid #fff;"></div>
<div class="b" style="left:457px;top:190px;width:198px;height:22px;border:1px solid #fff;"></div>
<div class="b" style="left:656px;top:190px;width:39px;height:22px;border:1px solid #fff;"></div>
<div class="b" style="left:696px;top:190px;width:489px;height:22px;border:1px solid #fff;"></div>
<div class="b" style="left:1186px;top:190px;width:199px;height:22px;border:1px solid #fff;"></div>
<div class="b" style="left:1386px;top:190px;width:39px;height:22px;border:1px solid #fff;"></div>
<div class="b" style="left:1426px;top:190px;width:490px;height:22px;border:1px solid #fff;"></div>
<div class="b" style="left:457px;top:213px;width:198px;height:22px;border:1px solid #fff;"></div>
<div class="b" style="left:656px;top:213px;width:39px;height:22px;border:1px solid #fff;"></div>
<div class="b" style="left:696px;top:213px;width:489px;height:22px;border:1px solid #fff;"></div>
<div class="b" style="left:1186px;top:213px;width:199px;height:22px;border:1px solid #fff;"></div>
<div class="b" style="left:1386px;top:213px;width:39px;height:22px;border:1px solid #fff;"></div>
<div class="b" style="left:1426px;top:213px;width:490px;height:22px;border:1px solid #fff;"></div>
<div class="b" style="left:456px;top:121px;width:1461px;height:1px;background:#000;"></div>
<div class="b" style="left:456px;top:143px;width:1461px;height:1px;background:#000;"></div>
<div class="b" style="left:456px;top:166px;width:1461px;height:1px;background:#000;"></div>
<div class="b" style="left:456px;top:189px;width:1461px;height:1px;background:#000;"></div>
<div class="b" style="left:456px;top:212px;width:1461px;height:1px;background:#000;"></div>
<div class="b" style="left:456px;top:235px;width:1461px;height:1px;background:#000;"></div>
<div class="b" style="left:456px;top:121px;width:1px;height:115px;background:#000;"></div>
<div class="b" style="left:655px;top:121px;width:1px;height:115px;background:#000;"></div>
<div class="b" style="left:695px;top:121px;width:1px;height:115px;background:#000;"></div>
<div class="b" style="left:1185px;top:121px;width:1px;height:115px;background:#000;"></div>
<div class="b" style="left:1385px;top:121px;width:1px;height:115px;background:#000;"></div>
<div class="b" style="left:1425px;top:121px;width:1px;height:115px;background:#000;"></div>
<div class="b" style="left:1916px;top:121px;width:1px;height:115px;background:#000;"></div>
<div class="t" style="left:460.00px;top:128.00px;font-size:11px;line-height:11px;font-weight:400;color:#000;letter-spacing:0px;">PCI Express capability version</div>
<div class="t" style="left:655.00px;width:40px;text-align:center;top:128.00px;font-size:11px;line-height:11px;font-weight:400;color:#000;letter-spacing:0px;text-indent:0px;">2</div>
<div class="t" style="left:699.00px;top:128.00px;font-size:11px;line-height:11px;font-weight:400;color:#000;letter-spacing:0px;">PCI Express Capability V2</div>
<div class="t" style="left:1189.00px;top:128.00px;font-size:11px;line-height:11px;font-weight:400;color:#000;letter-spacing:0.22px;">Maximum Payload Size</div>
<div class="t" style="left:1385.00px;width:40px;text-align:center;top:128.00px;font-size:11px;line-height:11px;font-weight:400;color:#000;letter-spacing:0px;text-indent:0px;">00</div>
<div class="t" style="left:1429.00px;top:128.00px;font-size:11px;line-height:11px;font-weight:400;color:#000;letter-spacing:0.22px;">128 bytes max payload size</div>
<div class="t" style="left:460.00px;top:151.00px;font-size:11px;line-height:11px;font-weight:400;color:#000;letter-spacing:0px;">Negotiated Link Width</div>
<div class="t" style="left:655.00px;width:40px;text-align:center;top:151.00px;font-size:11px;line-height:11px;font-weight:400;color:#000;letter-spacing:0px;text-indent:0px;">01</div>
<div class="t" style="left:699.00px;top:151.00px;font-size:11px;line-height:11px;font-weight:400;color:#000;letter-spacing:0px;">x1</div>
<div class="t" style="left:1189.00px;top:151.00px;font-size:11px;line-height:11px;font-weight:400;color:#000;letter-spacing:0.22px;">Maximum Payload Size supported</div>
<div class="t" style="left:1385.00px;width:40px;text-align:center;top:151.00px;font-size:11px;line-height:11px;font-weight:400;color:#000;letter-spacing:0px;text-indent:0px;">01</div>
<div class="t" style="left:1429.00px;top:151.00px;font-size:11px;line-height:11px;font-weight:400;color:#000;letter-spacing:0.22px;">256 bytes max payload size supported</div>
<div class="t" style="left:460.00px;top:174.00px;font-size:11px;line-height:11px;font-weight:400;color:#000;letter-spacing:0px;">Current Link Speed</div>
<div class="t" style="left:655.00px;width:40px;text-align:center;top:174.00px;font-size:11px;line-height:11px;font-weight:400;color:#000;letter-spacing:0px;text-indent:0px;">1</div>
<div class="t" style="left:699.00px;top:174.00px;font-size:11px;line-height:11px;font-weight:400;color:#000;letter-spacing:0px;">2.5 GT/s</div>
<div class="t" style="left:1189.00px;top:174.00px;font-size:11px;line-height:11px;font-weight:400;color:#000;letter-spacing:0.22px;">Implemented Capabilities</div>
<div class="t" style="left:1385.00px;width:40px;text-align:center;top:174.00px;font-size:11px;line-height:11px;font-weight:400;color:#000;letter-spacing:0px;text-indent:0px;">4</div>
<div class="t" style="left:1429.00px;top:174.00px;font-size:11px;line-height:11px;font-weight:400;color:#000;letter-spacing:0.22px;">4 capabilities implemented</div>
<div class="t" style="left:460.00px;top:197.00px;font-size:11px;line-height:11px;font-weight:400;color:#000;letter-spacing:0px;">Max Link Width</div>
<div class="t" style="left:655.00px;width:40px;text-align:center;top:197.00px;font-size:11px;line-height:11px;font-weight:400;color:#000;letter-spacing:0px;text-indent:0px;">01</div>
<div class="t" style="left:699.00px;top:197.00px;font-size:11px;line-height:11px;font-weight:400;color:#000;letter-spacing:0px;">x1</div>
<div class="t" style="left:1189.00px;top:197.00px;font-size:11px;line-height:11px;font-weight:400;color:#000;letter-spacing:0.22px;">Implemented Extended Capabilities</div>
<div class="t" style="left:1385.00px;width:40px;text-align:center;top:197.00px;font-size:11px;line-height:11px;font-weight:400;color:#000;letter-spacing:0px;text-indent:0px;">5</div>
<div class="t" style="left:1429.00px;top:197.00px;font-size:11px;line-height:11px;font-weight:400;color:#000;letter-spacing:0.22px;">5 extended capabilities implemented</div>
<div class="t" style="left:460.00px;top:220.00px;font-size:11px;line-height:11px;font-weight:400;color:#000;letter-spacing:0px;">Function Type</div>
<div class="t" style="left:655.00px;width:40px;text-align:center;top:220.00px;font-size:11px;line-height:11px;font-weight:400;color:#000;letter-spacing:0px;text-indent:0px;">1</div>
<div class="t" style="left:699.00px;top:220.00px;font-size:11px;line-height:11px;font-weight:400;color:#000;letter-spacing:0px;">Multi</div>
<div class="t" style="left:1189.00px;top:220.00px;font-size:11px;line-height:11px;font-weight:400;color:#000;letter-spacing:0.22px;">Memory supported</div>
<div class="t" style="left:1385.00px;width:40px;text-align:center;top:220.00px;font-size:11px;line-height:11px;font-weight:400;color:#000;letter-spacing:0px;text-indent:0px;">N/A</div>
<div class="t" style="left:1429.00px;top:220.00px;font-size:11px;line-height:11px;font-weight:400;color:#000;letter-spacing:0.22px;">No Memory BARs implemented</div>
<div class="b" style="left:453px;top:312px;width:597px;height:1px;background:#fafafa;"></div>
<div class="b" style="left:455px;top:314px;width:594px;height:844px;border:1px solid #c4c4c4;border-radius:5px;"></div>
<div class="b" style="left:1049px;top:312px;width:1px;height:848px;background:#f6f6f6;"></div>
<div class="b" style="left:1050px;top:312px;width:5px;height:848px;background:#202020;"></div>
<div class="b" style="left:460px;top:319px;width:541px;height:838px;overflow:hidden;background:#000;">
<div class="b" style="left:3px;top:3px;width:266px;height:38px;background:#b8b8b8;box-shadow:inset 1px 1px 0 #cacaca;"></div>
<div class="b" style="left:270px;top:3px;width:267px;height:38px;background:#b8b8b8;box-shadow:inset 1px 1px 0 #cacaca;"></div>
<div class="b" style="left:3px;top:42px;width:266px;height:39px;background:#b0c3d5;"></div>
<div class="b" style="left:270px;top:42px;width:267px;height:39px;background:#ffffff;"></div>
<div class="b" style="left:3px;top:82px;width:400px;height:39px;background:#b8b8b8;box-shadow:inset 1px 1px 0 #cacaca;"></div>
<div class="b" style="left:404px;top:82px;width:133px;height:39px;background:#b8b8b8;box-shadow:inset 1px 1px 0 #cacaca;"></div>
<div class="b" style="left:3px;top:122px;width:132px;height:39px;background:#ffffff;"></div>
<div class="b" style="left:136px;top:122px;width:133px;height:39px;background:#b8b8b8;box-shadow:inset 1px 1px 0 #cacaca;"></div>
<div class="b" style="left:270px;top:122px;width:133px;height:39px;background:#ffffff;"></div>
<div class="b" style="left:404px;top:122px;width:133px;height:39px;background:#ffffff;"></div>
<div class="b" style="left:3px;top:162px;width:534px;height:39px;background:#ffffff;"></div>
<div class="b" style="left:3px;top:202px;width:534px;height:39px;background:#ffffff;"></div>
<div class="b" style="left:3px;top:242px;width:132px;height:39px;background:#b8b8b8;box-shadow:inset 1px 1px 0 #cacaca;"></div>
<div class="b" style="left:136px;top:242px;width:133px;height:39px;background:#b8b8b8;box-shadow:inset 1px 1px 0 #cacaca;"></div>
<div class="b" style="left:270px;top:242px;width:133px;height:39px;background:#ffffff;"></div>
<div class="b" style="left:404px;top:242px;width:133px;height:39px;background:#ffffff;"></div>
<div class="b" style="left:3px;top:282px;width:266px;height:39px;background:#ffffff;"></div>
<div class="b" style="left:270px;top:282px;width:133px;height:39px;background:#ffffff;"></div>
<div class="b" style="left:404px;top:282px;width:133px;height:39px;background:#ffffff;"></div>
<div class="b" style="left:3px;top:322px;width:266px;height:39px;background:#ffffff;"></div>
<div class="b" style="left:270px;top:322px;width:267px;height:39px;background:#ffffff;"></div>
<div class="b" style="left:3px;top:362px;width:266px;height:39px;background:#ffffff;"></div>
<div class="b" style="left:270px;top:362px;width:267px;height:39px;background:#ffffff;"></div>
<div class="b" style="left:3px;top:402px;width:534px;height:39px;background:#ffffff;"></div>
<div class="b" style="left:3px;top:442px;width:534px;height:39px;background:#ffffff;"></div>
<div class="b" style="left:3px;top:482px;width:266px;height:39px;background:#b8b8b8;box-shadow:inset 1px 1px 0 #cacaca;"></div>
<div class="b" style="left:270px;top:482px;width:267px;height:39px;background:#b8b8b8;box-shadow:inset 1px 1px 0 #cacaca;"></div>
<div class="b" style="left:3px;top:522px;width:400px;height:39px;background:#949494;box-shadow:inset 1px 1px 0 #a4a4a4;"></div>
<div class="b" style="left:404px;top:522px;width:133px;height:39px;background:#b8b8b8;box-shadow:inset 1px 1px 0 #cacaca;"></div>
<div class="b" style="left:3px;top:562px;width:534px;height:39px;background:#ffffff;"></div>
<div class="b" style="left:3px;top:602px;width:266px;height:39px;background:#ffffff;"></div>
<div class="b" style="left:270px;top:602px;width:133px;height:39px;background:#b8b8b8;box-shadow:inset 1px 1px 0 #cacaca;"></div>
<div class="b" style="left:404px;top:602px;width:133px;height:39px;background:#ffffff;"></div>
<div class="b" style="left:3px;top:643px;width:266px;height:38px;background:#ffffff;"></div>
<div class="b" style="left:270px;top:643px;width:133px;height:38px;background:#b8b8b8;box-shadow:inset 1px 1px 0 #cacaca;"></div>
<div class="b" style="left:404px;top:643px;width:133px;height:38px;background:#b8b8b8;box-shadow:inset 1px 1px 0 #cacaca;"></div>
<div class="b" style="left:3px;top:682px;width:534px;height:39px;background:#ffffff;"></div>
<div class="b" style="left:3px;top:722px;width:266px;height:39px;background:#ffffff;"></div>
<div class="b" style="left:270px;top:722px;width:267px;height:39px;background:#ffffff;"></div>
<div class="b" style="left:3px;top:762px;width:534px;height:39px;background:#ffffff;"></div>
<div class="b" style="left:3px;top:802px;width:266px;height:39px;background:#ffffff;"></div>
<div class="b" style="left:270px;top:802px;width:267px;height:39px;background:#ffffff;"></div>
</div>
<div class="t" style="left:445.00px;width:300px;text-align:center;top:329.00px;font-size:10.6px;line-height:10.6px;font-weight:400;color:#000;letter-spacing:0px;text-indent:0px;">Device ID</div>
<div class="t" style="left:445.00px;width:300px;text-align:center;top:342.00px;font-size:11px;line-height:11px;font-weight:700;color:#000;letter-spacing:0.45px;text-indent:0.45px;">A33C</div>
<div class="t" style="left:713.50px;width:300px;text-align:center;top:329.00px;font-size:10.6px;line-height:10.6px;font-weight:400;color:#000;letter-spacing:0px;text-indent:0px;">Vendor ID</div>
<div class="t" style="left:713.50px;width:300px;text-align:center;top:342.00px;font-size:11px;line-height:11px;font-weight:700;color:#000;letter-spacing:0.82px;text-indent:0.82px;">8086</div>
<div class="t" style="left:1003.00px;top:336.00px;font-size:10.8px;line-height:10.8px;font-weight:400;color:#000;letter-spacing:-0.2px;">000h</div>
<div class="t" style="left:445.00px;width:300px;text-align:center;top:369.00px;font-size:10.6px;line-height:10.6px;font-weight:400;color:#000;letter-spacing:0px;text-indent:0px;">Status</div>
<div class="t" style="left:445.00px;width:300px;text-align:center;top:382.00px;font-size:11px;line-height:11px;font-weight:700;color:#000;letter-spacing:0.82px;text-indent:0.82px;">0010</div>
<div class="t" style="left:713.50px;width:300px;text-align:center;top:369.00px;font-size:10.6px;line-height:10.6px;font-weight:400;color:#000;letter-spacing:0px;text-indent:0px;">Command</div>
<div class="t" style="left:713.50px;width:300px;text-align:center;top:382.00px;font-size:11px;line-height:11px;font-weight:700;color:#000;letter-spacing:0.82px;text-indent:0.82px;">0407</div>
<div class="t" style="left:1003.00px;top:376.00px;font-size:10.8px;line-height:10.8px;font-weight:400;color:#000;letter-spacing:-0.2px;">004h</div>
<div class="t" style="left:512.00px;width:300px;text-align:center;top:409.00px;font-size:10.6px;line-height:10.6px;font-weight:400;color:#000;letter-spacing:0px;text-indent:0px;">Class Code</div>
<div class="t" style="left:512.00px;width:300px;text-align:center;top:422.00px;font-size:11px;line-height:11px;font-weight:700;color:#000;letter-spacing:0.82px;text-indent:0.82px;">060400</div>
<div class="t" style="left:780.50px;width:300px;text-align:center;top:409.00px;font-size:10.6px;line-height:10.6px;font-weight:400;color:#000;letter-spacing:0px;text-indent:0px;">Revision ID</div>
<div class="t" style="left:780.50px;width:300px;text-align:center;top:422.00px;font-size:11px;line-height:11px;font-weight:700;color:#000;letter-spacing:0.45px;text-indent:0.45px;">F0</div>
<div class="t" style="left:1003.00px;top:416.00px;font-size:10.8px;line-height:10.8px;font-weight:400;color:#000;letter-spacing:-0.2px;">008h</div>
<div class="t" style="left:378.00px;width:300px;text-align:center;top:449.00px;font-size:10.6px;line-height:10.6px;font-weight:400;color:#000;letter-spacing:0px;text-indent:0px;">BIST</div>
<div class="t" style="left:378.00px;width:300px;text-align:center;top:462.00px;font-size:11px;line-height:11px;font-weight:700;color:#000;letter-spacing:0.82px;text-indent:0.82px;">00</div>
<div class="t" style="left:512.50px;width:300px;text-align:center;top:449.00px;font-size:10.6px;line-height:10.6px;font-weight:400;color:#000;letter-spacing:0px;text-indent:0px;">Header Type</div>
<div class="t" style="left:512.50px;width:300px;text-align:center;top:462.00px;font-size:11px;line-height:11px;font-weight:700;color:#000;letter-spacing:0.82px;text-indent:0.82px;">81</div>
<div class="t" style="left:646.50px;width:300px;text-align:center;top:449.00px;font-size:10.6px;line-height:10.6px;font-weight:400;color:#000;letter-spacing:0px;text-indent:0px;">Latency Timer</div>
<div class="t" style="left:646.50px;width:300px;text-align:center;top:462.00px;font-size:11px;line-height:11px;font-weight:700;color:#000;letter-spacing:0.82px;text-indent:0.82px;">00</div>
<div class="t" style="left:780.50px;width:300px;text-align:center;top:449.00px;font-size:10.6px;line-height:10.6px;font-weight:400;color:#000;letter-spacing:0px;text-indent:0px;">Cache Line Size</div>
<div class="t" style="left:780.50px;width:300px;text-align:center;top:462.00px;font-size:11px;line-height:11px;font-weight:700;color:#000;letter-spacing:0.82px;text-indent:0.82px;">10</div>
<div class="t" style="left:1003.00px;top:456.00px;font-size:10.8px;line-height:10.8px;font-weight:400;color:#000;letter-spacing:-0.2px;">00Ch</div>
<div class="t" style="left:579.00px;width:300px;text-align:center;top:489.00px;font-size:10.6px;line-height:10.6px;font-weight:400;color:#000;letter-spacing:0px;text-indent:0px;">Base Address Register 0</div>
<div class="t" style="left:579.00px;width:300px;text-align:center;top:502.00px;font-size:11px;line-height:11px;font-weight:700;color:#000;letter-spacing:0.82px;text-indent:0.82px;">00000000</div>
<div class="t" style="left:1003.00px;top:496.00px;font-size:10.8px;line-height:10.8px;font-weight:400;color:#000;letter-spacing:-0.2px;">010h</div>
<div class="t" style="left:579.00px;width:300px;text-align:center;top:529.00px;font-size:10.6px;line-height:10.6px;font-weight:400;color:#000;letter-spacing:0px;text-indent:0px;">Base Address Register 1</div>
<div class="t" style="left:579.00px;width:300px;text-align:center;top:542.00px;font-size:11px;line-height:11px;font-weight:700;color:#000;letter-spacing:0.82px;text-indent:0.82px;">00000000</div>
<div class="t" style="left:1003.00px;top:536.00px;font-size:10.8px;line-height:10.8px;font-weight:400;color:#000;letter-spacing:-0.2px;">014h</div>
<div class="t" style="left:378.00px;width:300px;text-align:center;top:569.00px;font-size:10.6px;line-height:10.6px;font-weight:400;color:#000;letter-spacing:0px;text-indent:0px;">Sec_Lat_Timer</div>
<div class="t" style="left:378.00px;width:300px;text-align:center;top:582.00px;font-size:11px;line-height:11px;font-weight:700;color:#000;letter-spacing:0.82px;text-indent:0.82px;">00</div>
<div class="t" style="left:512.50px;width:300px;text-align:center;top:569.00px;font-size:10.6px;line-height:10.6px;font-weight:400;color:#000;letter-spacing:0px;text-indent:0px;">Sub_Bus_No</div>
<div class="t" style="left:512.50px;width:300px;text-align:center;top:582.00px;font-size:11px;line-height:11px;font-weight:700;color:#000;letter-spacing:0.82px;text-indent:0.82px;">02</div>
<div class="t" style="left:646.50px;width:300px;text-align:center;top:569.00px;font-size:10.6px;line-height:10.6px;font-weight:400;color:#000;letter-spacing:0px;text-indent:0px;">Sec_Bus_No</div>
<div class="t" style="left:646.50px;width:300px;text-align:center;top:582.00px;font-size:11px;line-height:11px;font-weight:700;color:#000;letter-spacing:0.82px;text-indent:0.82px;">02</div>
<div class="t" style="left:780.50px;width:300px;text-align:center;top:569.00px;font-size:10.6px;line-height:10.6px;font-weight:400;color:#000;letter-spacing:0px;text-indent:0px;">Prim_Bus_No</div>
<div class="t" style="left:780.50px;width:300px;text-align:center;top:582.00px;font-size:11px;line-height:11px;font-weight:700;color:#000;letter-spacing:0.82px;text-indent:0.82px;">00</div>
<div class="t" style="left:1003.00px;top:576.00px;font-size:10.8px;line-height:10.8px;font-weight:400;color:#000;letter-spacing:-0.2px;">018h</div>
<div class="t" style="left:445.00px;width:300px;text-align:center;top:609.00px;font-size:10.6px;line-height:10.6px;font-weight:400;color:#000;letter-spacing:0px;text-indent:0px;">Secondary Status Register</div>
<div class="t" style="left:445.00px;width:300px;text-align:center;top:622.00px;font-size:11px;line-height:11px;font-weight:700;color:#000;letter-spacing:0.82px;text-indent:0.82px;">2000</div>
<div class="t" style="left:646.50px;width:300px;text-align:center;top:609.00px;font-size:10.6px;line-height:10.6px;font-weight:400;color:#000;letter-spacing:0px;text-indent:0px;">I/O Limit</div>
<div class="t" style="left:646.50px;width:300px;text-align:center;top:622.00px;font-size:11px;line-height:11px;font-weight:700;color:#000;letter-spacing:0.82px;text-indent:0.82px;">30</div>
<div class="t" style="left:780.50px;width:300px;text-align:center;top:609.00px;font-size:10.6px;line-height:10.6px;font-weight:400;color:#000;letter-spacing:0px;text-indent:0px;">I/O Base</div>
<div class="t" style="left:780.50px;width:300px;text-align:center;top:622.00px;font-size:11px;line-height:11px;font-weight:700;color:#000;letter-spacing:0.82px;text-indent:0.82px;">30</div>
<div class="t" style="left:1003.00px;top:616.00px;font-size:10.8px;line-height:10.8px;font-weight:400;color:#000;letter-spacing:-0.2px;">01Ch</div>
<div class="t" style="left:445.00px;width:300px;text-align:center;top:649.00px;font-size:10.6px;line-height:10.6px;font-weight:400;color:#000;letter-spacing:0px;text-indent:0px;">Memory Limit</div>
<div class="t" style="left:445.00px;width:300px;text-align:center;top:662.00px;font-size:11px;line-height:11px;font-weight:700;color:#000;letter-spacing:0.64px;text-indent:0.64px;">A110</div>
<div class="t" style="left:713.50px;width:300px;text-align:center;top:649.00px;font-size:10.6px;line-height:10.6px;font-weight:400;color:#000;letter-spacing:0px;text-indent:0px;">Memory Base</div>
<div class="t" style="left:713.50px;width:300px;text-align:center;top:662.00px;font-size:11px;line-height:11px;font-weight:700;color:#000;letter-spacing:0.64px;text-indent:0.64px;">A110</div>
<div class="t" style="left:1003.00px;top:656.00px;font-size:10.8px;line-height:10.8px;font-weight:400;color:#000;letter-spacing:-0.2px;">020h</div>
<div class="t" style="left:445.00px;width:300px;text-align:center;top:689.00px;font-size:10.6px;line-height:10.6px;font-weight:400;color:#000;letter-spacing:0px;text-indent:0px;">Prefetchable Memory Limit</div>
<div class="t" style="left:445.00px;width:300px;text-align:center;top:702.00px;font-size:11px;line-height:11px;font-weight:700;color:#000;letter-spacing:0.82px;text-indent:0.82px;">0001</div>
<div class="t" style="left:713.50px;width:300px;text-align:center;top:689.00px;font-size:10.6px;line-height:10.6px;font-weight:400;color:#000;letter-spacing:0px;text-indent:0px;">Prefetchable Memory Base</div>
<div class="t" style="left:713.50px;width:300px;text-align:center;top:702.00px;font-size:11px;line-height:11px;font-weight:700;color:#000;letter-spacing:0.27px;text-indent:0.27px;">FFF1</div>
<div class="t" style="left:1003.00px;top:696.00px;font-size:10.8px;line-height:10.8px;font-weight:400;color:#000;letter-spacing:-0.2px;">024h</div>
<div class="t" style="left:579.00px;width:300px;text-align:center;top:729.00px;font-size:10.6px;line-height:10.6px;font-weight:400;color:#000;letter-spacing:0px;text-indent:0px;">Prefetchable Base Upper 32 Bits</div>
<div class="t" style="left:579.00px;width:300px;text-align:center;top:742.00px;font-size:11px;line-height:11px;font-weight:700;color:#000;letter-spacing:0.82px;text-indent:0.82px;">00000000</div>
<div class="t" style="left:1003.00px;top:736.00px;font-size:10.8px;line-height:10.8px;font-weight:400;color:#000;letter-spacing:-0.2px;">028h</div>
<div class="t" style="left:579.00px;width:300px;text-align:center;top:769.00px;font-size:10.6px;line-height:10.6px;font-weight:400;color:#000;letter-spacing:0px;text-indent:0px;">Prefetchable Limit Upper 32 Bits</div>
<div class="t" style="left:579.00px;width:300px;text-align:center;top:782.00px;font-size:11px;line-height:11px;font-weight:700;color:#000;letter-spacing:0.82px;text-indent:0.82px;">00000000</div>
<div class="t" style="left:1003.00px;top:776.00px;font-size:10.8px;line-height:10.8px;font-weight:400;color:#000;letter-spacing:-0.2px;">02Ch</div>
<div class="t" style="left:445.00px;width:300px;text-align:center;top:809.00px;font-size:10.6px;line-height:10.6px;font-weight:400;color:#000;letter-spacing:0px;text-indent:0px;">I/O Limit Upper  16 Bits</div>
<div class="t" style="left:445.00px;width:300px;text-align:center;top:822.00px;font-size:11px;line-height:11px;font-weight:700;color:#000;letter-spacing:0.82px;text-indent:0.82px;">0000</div>
<div class="t" style="left:713.50px;width:300px;text-align:center;top:809.00px;font-size:10.6px;line-height:10.6px;font-weight:400;color:#000;letter-spacing:0px;text-indent:0px;">I/O Base Upper  16 Bits</div>
<div class="t" style="left:713.50px;width:300px;text-align:center;top:822.00px;font-size:11px;line-height:11px;font-weight:700;color:#000;letter-spacing:0.82px;text-indent:0.82px;">0000</div>
<div class="t" style="left:1003.00px;top:816.00px;font-size:10.8px;line-height:10.8px;font-weight:400;color:#000;letter-spacing:-0.2px;">030h</div>
<div class="t" style="left:512.00px;width:300px;text-align:center;top:849.00px;font-size:10.6px;line-height:10.6px;font-weight:400;color:#000;letter-spacing:0px;text-indent:0px;">Reserved</div>
<div class="t" style="left:512.00px;width:300px;text-align:center;top:862.00px;font-size:11px;line-height:11px;font-weight:700;color:#000;letter-spacing:0.82px;text-indent:0.82px;">000000</div>
<div class="t" style="left:780.50px;width:300px;text-align:center;top:849.00px;font-size:10.6px;line-height:10.6px;font-weight:400;color:#000;letter-spacing:0px;text-indent:0px;">Cap_Ptr</div>
<div class="t" style="left:780.50px;width:300px;text-align:center;top:862.00px;font-size:11px;line-height:11px;font-weight:700;color:#000;letter-spacing:0.82px;text-indent:0.82px;">40</div>
<div class="t" style="left:1003.00px;top:856.00px;font-size:10.8px;line-height:10.8px;font-weight:400;color:#000;letter-spacing:-0.2px;">034h</div>
<div class="t" style="left:579.00px;width:300px;text-align:center;top:889.00px;font-size:10.6px;line-height:10.6px;font-weight:400;color:#000;letter-spacing:0px;text-indent:0px;">Expansion ROM Base Address</div>
<div class="t" style="left:579.00px;width:300px;text-align:center;top:902.00px;font-size:11px;line-height:11px;font-weight:700;color:#000;letter-spacing:0.82px;text-indent:0.82px;">00000000</div>
<div class="t" style="left:1003.00px;top:896.00px;font-size:10.8px;line-height:10.8px;font-weight:400;color:#000;letter-spacing:-0.2px;">038h</div>
<div class="t" style="left:445.00px;width:300px;text-align:center;top:929.00px;font-size:10.6px;line-height:10.6px;font-weight:400;color:#000;letter-spacing:0px;text-indent:0px;">Bridge Control</div>
<div class="t" style="left:445.00px;width:300px;text-align:center;top:942.00px;font-size:11px;line-height:11px;font-weight:700;color:#000;letter-spacing:0.82px;text-indent:0.82px;">0000</div>
<div class="t" style="left:646.50px;width:300px;text-align:center;top:929.00px;font-size:10.6px;line-height:10.6px;font-weight:400;color:#000;letter-spacing:0px;text-indent:0px;">Int_Pin</div>
<div class="t" style="left:646.50px;width:300px;text-align:center;top:942.00px;font-size:11px;line-height:11px;font-weight:700;color:#000;letter-spacing:0.82px;text-indent:0.82px;">01</div>
<div class="t" style="left:780.50px;width:300px;text-align:center;top:929.00px;font-size:10.6px;line-height:10.6px;font-weight:400;color:#000;letter-spacing:0px;text-indent:0px;">Int_Line</div>
<div class="t" style="left:780.50px;width:300px;text-align:center;top:942.00px;font-size:11px;line-height:11px;font-weight:700;color:#000;letter-spacing:0.82px;text-indent:0.82px;">00</div>
<div class="t" style="left:1003.00px;top:936.00px;font-size:10.8px;line-height:10.8px;font-weight:400;color:#000;letter-spacing:-0.2px;">03Ch</div>
<div class="t" style="left:445.00px;width:300px;text-align:center;top:969.00px;font-size:10.6px;line-height:10.6px;font-weight:400;color:#000;letter-spacing:0px;text-indent:0px;">PCI Express Capabilities Register</div>
<div class="t" style="left:445.00px;width:300px;text-align:center;top:982.00px;font-size:11px;line-height:11px;font-weight:700;color:#000;letter-spacing:0.82px;text-indent:0.82px;">0142</div>
<div class="t" style="left:646.50px;width:300px;text-align:center;top:969.00px;font-size:10.6px;line-height:10.6px;font-weight:400;color:#000;letter-spacing:0px;text-indent:0px;">Next_Item_Ptr</div>
<div class="t" style="left:646.50px;width:300px;text-align:center;top:982.00px;font-size:11px;line-height:11px;font-weight:700;color:#000;letter-spacing:0.82px;text-indent:0.82px;">80</div>
<div class="t" style="left:780.50px;width:300px;text-align:center;top:969.00px;font-size:10.6px;line-height:10.6px;font-weight:400;color:#000;letter-spacing:0px;text-indent:0px;">Cap_ID</div>
<div class="t" style="left:780.50px;width:300px;text-align:center;top:982.00px;font-size:11px;line-height:11px;font-weight:700;color:#000;letter-spacing:0.82px;text-indent:0.82px;">10</div>
<div class="t" style="left:1003.00px;top:976.00px;font-size:10.8px;line-height:10.8px;font-weight:400;color:#000;letter-spacing:-0.2px;">040h</div>
<div class="t" style="left:579.00px;width:300px;text-align:center;top:1009.00px;font-size:10.6px;line-height:10.6px;font-weight:400;color:#000;letter-spacing:0px;text-indent:0px;">Device Capabilities Register</div>
<div class="t" style="left:579.00px;width:300px;text-align:center;top:1022.00px;font-size:11px;line-height:11px;font-weight:700;color:#000;letter-spacing:0.82px;text-indent:0.82px;">00008001</div>
<div class="t" style="left:1003.00px;top:1016.00px;font-size:10.8px;line-height:10.8px;font-weight:400;color:#000;letter-spacing:-0.2px;">044h</div>
<div class="t" style="left:445.00px;width:300px;text-align:center;top:1049.00px;font-size:10.6px;line-height:10.6px;font-weight:400;color:#000;letter-spacing:0px;text-indent:0px;">Device Status Register</div>
<div class="t" style="left:445.00px;width:300px;text-align:center;top:1062.00px;font-size:11px;line-height:11px;font-weight:700;color:#000;letter-spacing:0.82px;text-indent:0.82px;">0010</div>
<div class="t" style="left:713.50px;width:300px;text-align:center;top:1049.00px;font-size:10.6px;line-height:10.6px;font-weight:400;color:#000;letter-spacing:0px;text-indent:0px;">Device Control Register</div>
<div class="t" style="left:713.50px;width:300px;text-align:center;top:1062.00px;font-size:11px;line-height:11px;font-weight:700;color:#000;letter-spacing:0.82px;text-indent:0.82px;">0007</div>
<div class="t" style="left:1003.00px;top:1056.00px;font-size:10.8px;line-height:10.8px;font-weight:400;color:#000;letter-spacing:-0.2px;">048h</div>
<div class="t" style="left:579.00px;width:300px;text-align:center;top:1089.00px;font-size:10.6px;line-height:10.6px;font-weight:400;color:#000;letter-spacing:0px;text-indent:0px;">Link Capabilities Register</div>
<div class="t" style="left:579.00px;width:300px;text-align:center;top:1102.00px;font-size:11px;line-height:11px;font-weight:700;color:#000;letter-spacing:0.73px;text-indent:0.73px;">05724C13</div>
<div class="t" style="left:1003.00px;top:1096.00px;font-size:10.8px;line-height:10.8px;font-weight:400;color:#000;letter-spacing:-0.2px;">04Ch</div>
<div class="t" style="left:445.00px;width:300px;text-align:center;top:1129.00px;font-size:10.6px;line-height:10.6px;font-weight:400;color:#000;letter-spacing:0px;text-indent:0px;">Link Status Register</div>
<div class="t" style="left:445.00px;width:300px;text-align:center;top:1142.00px;font-size:11px;line-height:11px;font-weight:700;color:#000;letter-spacing:0.82px;text-indent:0.82px;">7011</div>
<div class="t" style="left:713.50px;width:300px;text-align:center;top:1129.00px;font-size:10.6px;line-height:10.6px;font-weight:400;color:#000;letter-spacing:0px;text-indent:0px;">Link Control Register</div>
<div class="t" style="left:713.50px;width:300px;text-align:center;top:1142.00px;font-size:11px;line-height:11px;font-weight:700;color:#000;letter-spacing:0.82px;text-indent:0.82px;">0040</div>
<div class="t" style="left:1003.00px;top:1136.00px;font-size:10.8px;line-height:10.8px;font-weight:400;color:#000;letter-spacing:-0.2px;">050h</div>
<div class="b" style="left:460px;top:959px;width:541px;height:3px;background:#000;"></div>
<div class="b" style="left:1032px;top:315px;width:15px;height:842px;background:#2c2c2c;"></div>
<div class="b" style="left:1032px;top:315px;width:15px;height:17px;border-radius:3px 3px 2px 2px;background:linear-gradient(#5a5a5a,#474747);border:1px solid #3a3a3a;"></div>
<svg style="left:1036px;top:320px" width="8" height="6" viewBox="0 0 8 6"><path d="M0 5h7l-3.5-4z" fill="#d8d8d8"/></svg>
<div class="b" style="left:1032px;top:333px;width:15px;height:20px;border-radius:3px;background:linear-gradient(90deg,#4a4a4a,#5c5c5c 50%,#4a4a4a);border:1px solid #6a6a6a;"></div>
<svg style="left:1035px;top:339px" width="10" height="8" viewBox="0 0 10 8"><path d="M0 1.5h9M0 4h9M0 6.5h9" stroke="#7c7c7c" stroke-width="1"/></svg>
<div class="b" style="left:1032px;top:1140px;width:15px;height:17px;border-radius:2px 2px 3px 3px;background:linear-gradient(#5a5a5a,#474747);border:1px solid #3a3a3a;"></div>
<svg style="left:1036px;top:1146px" width="8" height="6" viewBox="0 0 8 6"><path d="M0 1h7l-3.5 4z" fill="#d8d8d8"/></svg>
<div class="t" style="left:906.00px;top:572.00px;font-size:15.3px;line-height:15.3px;font-weight:400;color:#e4121c;letter-spacing:0.05px;-webkit-text-stroke:0.35px #e4121c;">chipdebug.com</div>
<div class="b" style="left:1055px;top:312px;width:865px;height:435px;border:1px solid #8a8a8a;border-top-color:#b4b4b4;border-radius:4px;border-left-color:#777;"></div>
<div class="b" style="left:1055px;top:747px;width:865px;height:5px;background:#202020;"></div>
<div class="b" style="left:1055px;top:746px;width:865px;height:1px;background:#f4f4f4;"></div>
<div class="t" style="left:1058.00px;top:319.00px;font-size:17.5px;line-height:17.5px;font-weight:700;color:#000;letter-spacing:1.4px;">Status</div>
<div class="t" style="left:1058.00px;top:341.00px;font-size:12.6px;line-height:12.6px;font-weight:700;color:#000;letter-spacing:0.5px;">Type 1 Configuration Space Header</div>
<div class="b" style="left:1208px;top:374px;width:19px;height:26px;background:#fff;border:1px solid #000;"></div>
<div class="t" style="left:1197.50px;width:40px;text-align:center;top:382.00px;font-size:11px;line-height:11px;font-weight:700;color:#000;letter-spacing:0px;text-indent:0px;">0</div>
<div class="b" style="left:1226px;top:374px;width:19px;height:26px;background:#fff;border:1px solid #000;"></div>
<div class="t" style="left:1215.50px;width:40px;text-align:center;top:382.00px;font-size:11px;line-height:11px;font-weight:700;color:#000;letter-spacing:0px;text-indent:0px;">0</div>
<div class="b" style="left:1244px;top:374px;width:19px;height:26px;background:#fff;border:1px solid #000;"></div>
<div class="t" style="left:1233.50px;width:40px;text-align:center;top:382.00px;font-size:11px;line-height:11px;font-weight:700;color:#000;letter-spacing:0px;text-indent:0px;">0</div>
<div class="b" style="left:1262px;top:374px;width:19px;height:26px;background:#fff;border:1px solid #000;"></div>
<div class="t" style="left:1251.50px;width:40px;text-align:center;top:382.00px;font-size:11px;line-height:11px;font-weight:700;color:#000;letter-spacing:0px;text-indent:0px;">0</div>
<div class="b" style="left:1280px;top:374px;width:19px;height:26px;background:#fff;border:1px solid #000;"></div>
<div class="t" style="left:1269.50px;width:40px;text-align:center;top:382.00px;font-size:11px;line-height:11px;font-weight:700;color:#000;letter-spacing:0px;text-indent:0px;">0</div>
<div class="b" style="left:1298px;top:374px;width:30px;height:26px;background:#b4b4b4;border:1px solid #000;box-shadow:inset 1px 1px 0 #c4c4c4, inset -1px -1px 0 #a8a8a8;"></div>
<div class="t" style="left:1293.00px;width:40px;text-align:center;top:382.00px;font-size:11px;line-height:11px;font-weight:700;color:#000;letter-spacing:0.9px;text-indent:0.9px;">00</div>
<div class="b" style="left:1327px;top:374px;width:19px;height:26px;background:#fff;border:1px solid #000;"></div>
<div class="t" style="left:1316.50px;width:40px;text-align:center;top:382.00px;font-size:11px;line-height:11px;font-weight:700;color:#000;letter-spacing:0px;text-indent:0px;">0</div>
<div class="b" style="left:1345px;top:374px;width:19px;height:26px;background:#b4b4b4;border:1px solid #000;box-shadow:inset 1px 1px 0 #c4c4c4, inset -1px -1px 0 #a8a8a8;"></div>
<div class="t" style="left:1334.50px;width:40px;text-align:center;top:382.00px;font-size:11px;line-height:11px;font-weight:700;color:#000;letter-spacing:0px;text-indent:0px;">0</div>
<div class="b" style="left:1363px;top:374px;width:19px;height:26px;background:#909090;border:1px solid #000;box-shadow:inset 1px 1px 0 #c4c4c4, inset -1px -1px 0 #a8a8a8;"></div>
<div class="t" style="left:1352.50px;width:40px;text-align:center;top:382.00px;font-size:11px;line-height:11px;font-weight:700;color:#000;letter-spacing:0px;text-indent:0px;">0</div>
<div class="b" style="left:1381px;top:374px;width:19px;height:26px;background:#b4b4b4;border:1px solid #000;box-shadow:inset 1px 1px 0 #c4c4c4, inset -1px -1px 0 #a8a8a8;"></div>
<div class="t" style="left:1370.50px;width:40px;text-align:center;top:382.00px;font-size:11px;line-height:11px;font-weight:700;color:#000;letter-spacing:0px;text-indent:0px;">0</div>
<div class="b" style="left:1399px;top:374px;width:19px;height:26px;background:#b4b4b4;border:1px solid #000;box-shadow:inset 1px 1px 0 #c4c4c4, inset -1px -1px 0 #a8a8a8;"></div>
<div class="t" style="left:1388.50px;width:40px;text-align:center;top:382.00px;font-size:11px;line-height:11px;font-weight:700;color:#000;letter-spacing:0px;text-indent:0px;">1</div>
<div class="b" style="left:1417px;top:374px;width:19px;height:26px;background:#b4b4b4;border:1px solid #000;box-shadow:inset 1px 1px 0 #c4c4c4, inset -1px -1px 0 #a8a8a8;"></div>
<div class="t" style="left:1406.50px;width:40px;text-align:center;top:382.00px;font-size:11px;line-height:11px;font-weight:700;color:#000;letter-spacing:0px;text-indent:0px;">0</div>
<div class="b" style="left:1435px;top:374px;width:33px;height:26px;background:#8e8e8e;border:1px solid #000;box-shadow:inset 1px 1px 0 #c4c4c4, inset -1px -1px 0 #a8a8a8;"></div>
<div class="t" style="left:1431.50px;width:40px;text-align:center;top:382.00px;font-size:11px;line-height:11px;font-weight:700;color:#000;letter-spacing:0.9px;text-indent:0.9px;">000</div>
<div class="t" style="left:1203.00px;width:30px;text-align:center;top:365.00px;font-size:9px;line-height:9px;font-weight:400;color:#1a1a1a;letter-spacing:0px;text-indent:0px;">15</div>
<div class="t" style="left:1221.00px;width:30px;text-align:center;top:365.00px;font-size:9px;line-height:9px;font-weight:400;color:#1a1a1a;letter-spacing:0px;text-indent:0px;">14</div>
<div class="t" style="left:1239.00px;width:30px;text-align:center;top:365.00px;font-size:9px;line-height:9px;font-weight:400;color:#1a1a1a;letter-spacing:0px;text-indent:0px;">13</div>
<div class="t" style="left:1257.00px;width:30px;text-align:center;top:365.00px;font-size:9px;line-height:9px;font-weight:400;color:#1a1a1a;letter-spacing:0px;text-indent:0px;">12</div>
<div class="t" style="left:1275.00px;width:30px;text-align:center;top:365.00px;font-size:9px;line-height:9px;font-weight:400;color:#1a1a1a;letter-spacing:0px;text-indent:0px;">11</div>
<div class="t" style="left:1293.00px;width:30px;text-align:center;top:365.00px;font-size:9px;line-height:9px;font-weight:400;color:#1a1a1a;letter-spacing:0px;text-indent:0px;">10</div>
<div class="t" style="left:1305.00px;width:30px;text-align:center;top:365.00px;font-size:9px;line-height:9px;font-weight:400;color:#1a1a1a;letter-spacing:0px;text-indent:0px;">9</div>
<div class="t" style="left:1321.00px;width:30px;text-align:center;top:365.00px;font-size:9px;line-height:9px;font-weight:400;color:#1a1a1a;letter-spacing:0px;text-indent:0px;">8</div>
<div class="t" style="left:1339.00px;width:30px;text-align:center;top:365.00px;font-size:9px;line-height:9px;font-weight:400;color:#1a1a1a;letter-spacing:0px;text-indent:0px;">7</div>
<div class="t" style="left:1357.00px;width:30px;text-align:center;top:365.00px;font-size:9px;line-height:9px;font-weight:400;color:#1a1a1a;letter-spacing:0px;text-indent:0px;">6</div>
<div class="t" style="left:1375.00px;width:30px;text-align:center;top:365.00px;font-size:9px;line-height:9px;font-weight:400;color:#1a1a1a;letter-spacing:0px;text-indent:0px;">5</div>
<div class="t" style="left:1393.00px;width:30px;text-align:center;top:365.00px;font-size:9px;line-height:9px;font-weight:400;color:#1a1a1a;letter-spacing:0px;text-indent:0px;">4</div>
<div class="t" style="left:1411.00px;width:30px;text-align:center;top:365.00px;font-size:9px;line-height:9px;font-weight:400;color:#1a1a1a;letter-spacing:0px;text-indent:0px;">3</div>
<div class="t" style="left:1427.00px;width:30px;text-align:center;top:365.00px;font-size:9px;line-height:9px;font-weight:400;color:#1a1a1a;letter-spacing:0px;text-indent:0px;">2</div>
<div class="t" style="left:1445.00px;width:30px;text-align:center;top:365.00px;font-size:9px;line-height:9px;font-weight:400;color:#1a1a1a;letter-spacing:0px;text-indent:0px;">0</div>
<svg style="left:0;top:0" width="1920" height="1160"><path d="M1217.5 409V423.5H1208 M1235.5 409V439.5H1208 M1253.5 409V455.5H1208 M1271.5 409V471.5H1208 M1289.5 409V487.5H1208 M1312.5 409V503.5H1208 M1336.5 409V519.5H1208 M1354.5 409V535.5H1208 M1372.5 409V551.5H1208 M1390.5 409V567.5H1208 M1408.5 409V583.5H1208 M1426.5 409V599.5H1208 M1451.5 409V615.5H1208" fill="none" stroke="#000" stroke-width="1"/><path d="M1213.5 410L1217.5 401L1221.5 410z M1231.5 410L1235.5 401L1239.5 410z M1249.5 410L1253.5 401L1257.5 410z M1267.5 410L1271.5 401L1275.5 410z M1285.5 410L1289.5 401L1293.5 410z M1308.5 410L1312.5 401L1316.5 410z M1332.5 410L1336.5 401L1340.5 410z M1350.5 410L1354.5 401L1358.5 410z M1368.5 410L1372.5 401L1376.5 410z M1386.5 410L1390.5 401L1394.5 410z M1404.5 410L1408.5 401L1412.5 410z M1422.5 410L1426.5 401L1430.5 410z M1447.5 410L1451.5 401L1455.5 410z" fill="#000"/></svg>
<div class="t" style="left:1005.50px;width:200px;text-align:right;top:418.00px;font-size:11.5px;line-height:11.5px;font-weight:400;color:#000;letter-spacing:0.08px;">Detected Parity Error</div>
<div class="t" style="left:1005.50px;width:200px;text-align:right;top:434.00px;font-size:11.5px;line-height:11.5px;font-weight:400;color:#000;letter-spacing:0.08px;">Signaled System Error</div>
<div class="t" style="left:1005.50px;width:200px;text-align:right;top:450.00px;font-size:11.5px;line-height:11.5px;font-weight:400;color:#000;letter-spacing:0.08px;">Received Master Abort</div>
<div class="t" style="left:1005.50px;width:200px;text-align:right;top:466.00px;font-size:11.5px;line-height:11.5px;font-weight:400;color:#000;letter-spacing:0.08px;">Received Target Abort</div>
<div class="t" style="left:1005.50px;width:200px;text-align:right;top:482.00px;font-size:11.5px;line-height:11.5px;font-weight:400;color:#000;letter-spacing:0.08px;">Signaled Target Abort</div>
<div class="t" style="left:1005.50px;width:200px;text-align:right;top:498.00px;font-size:11.5px;line-height:11.5px;font-weight:400;color:#000;letter-spacing:0.08px;">DEVSEL Timing</div>
<div class="t" style="left:1005.50px;width:200px;text-align:right;top:514.00px;font-size:11.5px;line-height:11.5px;font-weight:400;color:#000;letter-spacing:0.08px;">Master Data Parity Error</div>
<div class="t" style="left:1061.00px;top:530.00px;font-size:11.5px;line-height:11.5px;font-weight:400;color:#000;letter-spacing:0.05px;">Fast Back-to-Back Transa...</div>
<div class="t" style="left:1005.50px;width:200px;text-align:right;top:546.00px;font-size:11.5px;line-height:11.5px;font-weight:400;color:#000;letter-spacing:0.08px;">Reserved</div>
<div class="t" style="left:1005.50px;width:200px;text-align:right;top:562.00px;font-size:11.5px;line-height:11.5px;font-weight:400;color:#000;letter-spacing:0.08px;">66 MHz Capable</div>
<div class="t" style="left:1005.50px;width:200px;text-align:right;top:578.00px;font-size:11.5px;line-height:11.5px;font-weight:400;color:#000;letter-spacing:0.08px;">Capabilities List</div>
<div class="t" style="left:1005.50px;width:200px;text-align:right;top:594.00px;font-size:11.5px;line-height:11.5px;font-weight:400;color:#000;letter-spacing:0.08px;">Interrupt Status</div>
<div class="t" style="left:1005.50px;width:200px;text-align:right;top:610.00px;font-size:11.5px;line-height:11.5px;font-weight:400;color:#000;letter-spacing:0.08px;">Reserved</div>
<div class="b" style="left:1055px;top:752px;width:865px;height:407px;border:1px solid #8a8a8a;border-right:none;border-top:none;border-radius:0 0 0 4px;"></div>
<div class="b" style="left:1056px;top:752px;width:848px;height:48px;background:#b0c2d4;"></div>
<div class="t" style="left:1060.00px;top:761.00px;font-size:18px;line-height:18px;font-weight:700;color:#000;letter-spacing:0.82px;">Description</div>
<div class="t" style="left:1060.00px;top:782.00px;font-size:13px;line-height:13px;font-weight:400;color:#000;letter-spacing:0px;">The Status register is used to record status information for PCI bus related events.</div>
<div class="b" style="left:1056px;top:800px;width:848px;height:358px;overflow:hidden;">
<div class="t" style="left:4.00px;top:6.00px;font-size:16.5px;line-height:16.5px;font-weight:700;color:#000;letter-spacing:0.5px;">15 - Detected Parity Error (RW1C)</div>
<div class="t" style="left:4.00px;top:25.00px;font-size:13px;line-height:13px;font-weight:400;color:#000;letter-spacing:-0.06px;">This bit is set by the bridge whenever it receives a poisoned TLP or, if supported, a TLP with bad ECRC (Read Completion or Write Request) on the</div>
<div class="t" style="left:4.00px;top:41.00px;font-size:13px;line-height:13px;font-weight:400;color:#000;letter-spacing:-0.05px;">primary interface, regardless of the state the Parity Error Response bit in the Command register.</div>
<div class="t" style="left:4.00px;top:73.00px;font-size:13px;line-height:13px;font-weight:400;color:#000;letter-spacing:-0.15px;">Predefined values:</div>
<div class="b" style="left:35px;top:104.5px;width:5px;height:5px;border-radius:50%;background:#000;"></div>
<div class="t" style="left:44.00px;top:101.00px;font-size:13px;line-height:13px;font-weight:700;color:#000;letter-spacing:0.25px;">0b: Data poisoning and bad ECRC not detected by the bridge on its primary interface</div>
<div class="b" style="left:35px;top:120.5px;width:5px;height:5px;border-radius:50%;background:#000;"></div>
<div class="t" style="left:44.00px;top:117.00px;font-size:13px;line-height:13px;font-weight:400;color:#000;letter-spacing:-0.08px;">1b: Data poisoning or bad ECRC detected by the bridge on its primary interface</div>
<div class="t" style="left:4.00px;top:140.00px;font-size:16.5px;line-height:16.5px;font-weight:700;color:#000;letter-spacing:0.33px;">14 - Signaled System Error (RW1C)</div>
<div class="t" style="left:4.00px;top:160.00px;font-size:13px;line-height:13px;font-weight:400;color:#000;letter-spacing:-0.16px;">This bit is set when the bridge sends an ERR_FATAL or ERR_NONFATAL message to the Root Complex and the SERR# Enable bit in the Command</div>
<div class="t" style="left:4.00px;top:176.00px;font-size:13px;line-height:13px;font-weight:400;color:#000;letter-spacing:-0.05px;">register is set.</div>
<div class="t" style="left:4.00px;top:208.00px;font-size:13px;line-height:13px;font-weight:400;color:#000;letter-spacing:-0.15px;">Predefined values:</div>
<div class="b" style="left:35px;top:239.5px;width:5px;height:5px;border-radius:50%;background:#000;"></div>
<div class="t" style="left:44.00px;top:236.00px;font-size:13px;line-height:13px;font-weight:700;color:#000;letter-spacing:0.25px;">0b: Neither ERR_FATAL nor ERR_NONFATAL transmitted on primary interface</div>
<div class="b" style="left:35px;top:255.5px;width:5px;height:5px;border-radius:50%;background:#000;"></div>
<div class="t" style="left:44.00px;top:252.00px;font-size:13px;line-height:13px;font-weight:400;color:#000;letter-spacing:-0.08px;">1b: ERR_FATAL or ERR_NONFATAL transmitted on primary interface</div>
<div class="t" style="left:4.00px;top:276.00px;font-size:16.5px;line-height:16.5px;font-weight:700;color:#000;letter-spacing:0.5px;">13 - Received Master Abort (RW1C)</div>
<div class="t" style="left:4.00px;top:295.00px;font-size:13px;line-height:13px;font-weight:400;color:#000;letter-spacing:-0.03px;">This bit is set when the bridge receives a Completion with Unsupported Request Completion Status on its primary interface.</div>
<div class="t" style="left:4.00px;top:327.00px;font-size:13px;line-height:13px;font-weight:400;color:#000;letter-spacing:-0.15px;">Predefined values:</div>
<div class="b" style="left:35px;top:357.0px;width:5px;height:5px;border-radius:50%;background:#000;"></div>
<div class="t" style="left:44.00px;top:354.00px;font-size:13px;line-height:13px;font-weight:700;color:#000;letter-spacing:0.25px;">0b: Unsupported Request Completion Status not received on primary interface</div>
<div class="b" style="left:35px;top:373.0px;width:5px;height:5px;border-radius:50%;background:#000;"></div>
<div class="t" style="left:44.00px;top:370.00px;font-size:13px;line-height:13px;font-weight:400;color:#000;letter-spacing:-0.08px;">1b: Unsupported Request Completion Status received on primary interface</div>
</div>
<div class="b" style="left:1904px;top:752px;width:15px;height:405px;background:#202020;"></div>
<div class="b" style="left:1904px;top:754px;width:15px;height:16px;border-radius:3px 3px 2px 2px;background:linear-gradient(#5a5a5a,#474747);border:1px solid #3a3a3a;"></div>
<svg style="left:1908px;top:759px" width="8" height="6" viewBox="0 0 8 6"><path d="M0 5h7l-3.5-4z" fill="#d8d8d8"/></svg>
<div class="b" style="left:1904px;top:770px;width:15px;height:121px;border-radius:3px;background:linear-gradient(90deg,#555,#686868 50%,#555);border:1px solid #707070;"></div>
<svg style="left:1907px;top:827px" width="10" height="8" viewBox="0 0 10 8"><path d="M0 1.5h9M0 4h9M0 6.5h9" stroke="#8a8a8a" stroke-width="1"/></svg>
<div class="b" style="left:1904px;top:1141px;width:15px;height:16px;border-radius:2px 2px 3px 3px;background:linear-gradient(#5a5a5a,#474747);border:1px solid #3a3a3a;"></div>
<svg style="left:1908px;top:1146px" width="8" height="6" viewBox="0 0 8 6"><path d="M0 1h7l-3.5 4z" fill="#d8d8d8"/></svg>
<div class="b" style="left:449px;top:581px;width:2px;height:76px;background:repeating-linear-gradient(#9ca2a2 0,#9ca2a2 2px,#6a7070 2px,#6a7070 3px);"></div>
<div class="b" style="left:1051px;top:698px;width:2px;height:75px;background:repeating-linear-gradient(#9ca2a2 0,#9ca2a2 2px,#6a7070 2px,#6a7070 3px);"></div>
<div class="b" style="left:1148px;top:308px;width:75px;height:2px;background:repeating-linear-gradient(90deg,#9ca2a2 0,#9ca2a2 2px,#6a7070 2px,#6a7070 3px);"></div>
<div class="b" style="left:1449px;top:748px;width:75px;height:2px;background:repeating-linear-gradient(90deg,#9ca2a2 0,#9ca2a2 2px,#6a7070 2px,#6a7070 3px);"></div>
</body></html>
